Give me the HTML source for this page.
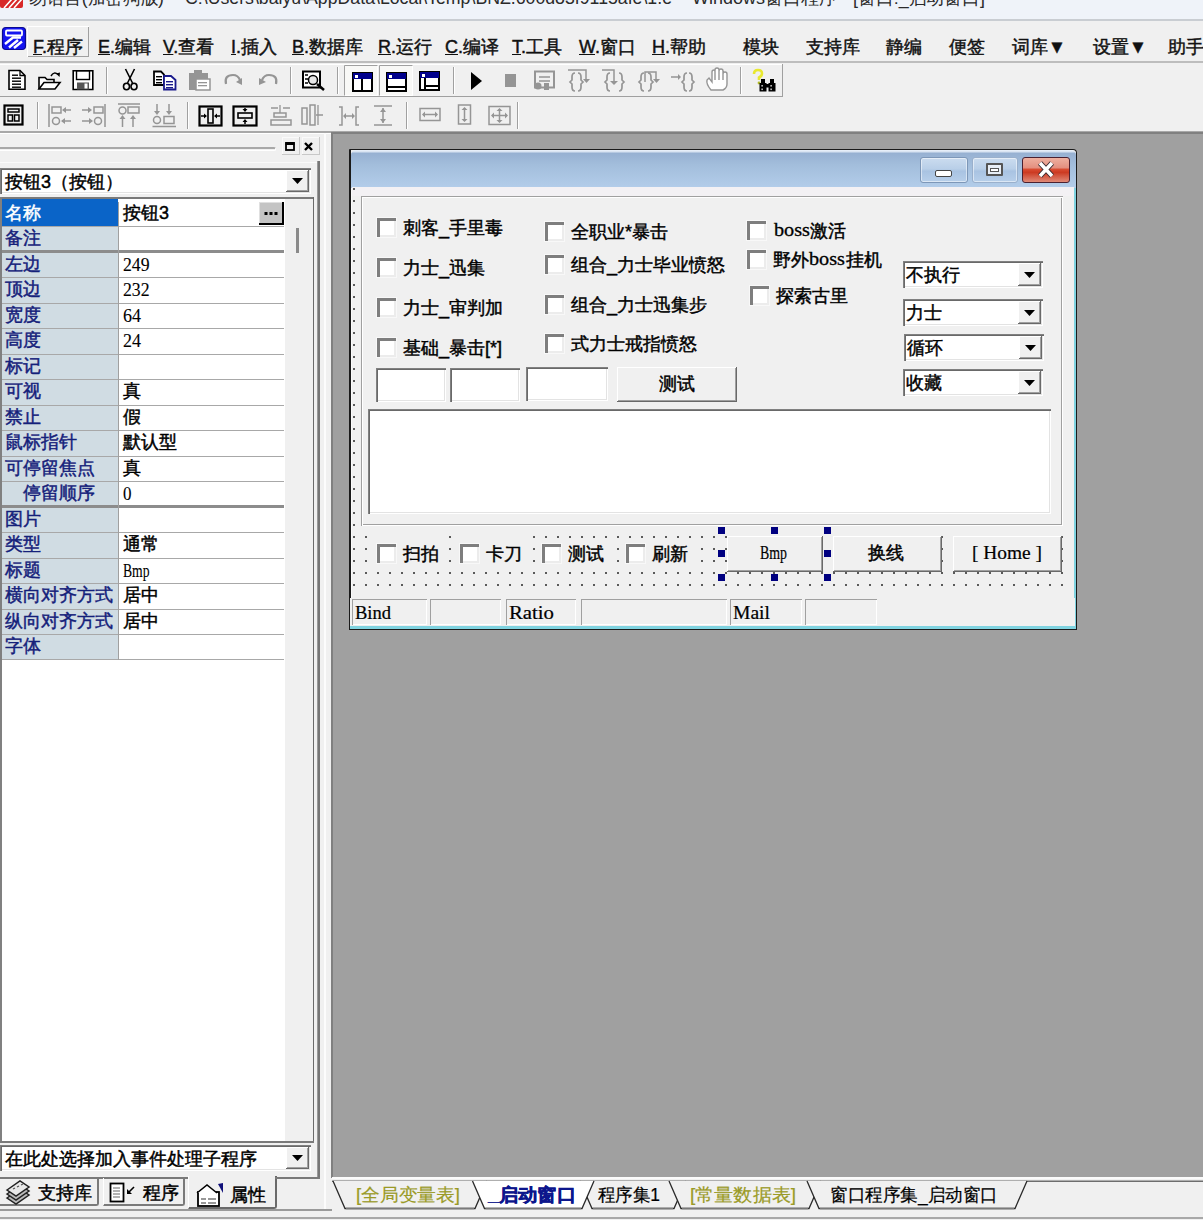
<!DOCTYPE html><html><head><meta charset="utf-8"><style>
*{margin:0;padding:0;box-sizing:border-box}
html,body{width:1203px;height:1220px;overflow:hidden;background:#f0f0f0}
body{font-family:"Liberation Sans",sans-serif;font-size:18px;color:#000;position:relative;-webkit-text-stroke:0.45px currentColor}
.a{position:absolute}
.t{white-space:nowrap;line-height:20px}
.raised{background:#f0f0f0;box-shadow:inset -1px -1px 0 #696969,inset 1px 1px 0 #fff,inset -2px -2px 0 #a0a0a0}
.sunken{background:#fff;box-shadow:inset 1px 1px 0 #808080,inset 2px 2px 0 #696969,inset -1px -1px 0 #fff,inset -2px -2px 0 #e3e3e3}
.sunk1{box-shadow:inset 1px 1px 0 #a0a0a0,inset -1px -1px 0 #fff}
.fit span{display:inline-block;transform-origin:0 50%}
</style></head><body>
<div class="a " style="left:0px;top:0px;width:1203px;height:20px;background:#eff3f9"></div>
<div class="a " style="left:0px;top:19px;width:1203px;height:2px;background:#c9cdd2"></div>
<svg class="a" style="left:0;top:0" width="24" height="10"><rect x="0" y="-4" width="23" height="12" rx="2" fill="#d82828"/><path d="M4 8L12 -1M9 8L17 -1M14 8L22 -1" stroke="#fff" stroke-width="1.6"/></svg>
<div class="a t fit " style="left:29px;top:-12px;width:135px;font-size:18px;color:#2a2a2a;-webkit-text-stroke:0"><span>易语言(加密狗版)</span></div>
<div class="a t fit " style="left:185px;top:-12px;width:487px;font-size:18px;color:#2a2a2a;-webkit-text-stroke:0"><span>C:\Users\baiyu\AppData\Local\Temp\BNZ.600d83f9115afe\1.e</span></div>
<div class="a t fit " style="left:692px;top:-12px;width:145px;font-size:18px;color:#2a2a2a;-webkit-text-stroke:0"><span>Windows窗口程序</span></div>
<div class="a t fit " style="left:853px;top:-12px;width:132px;font-size:18px;color:#2a2a2a;-webkit-text-stroke:0"><span>[窗口:_启动窗口]</span></div>
<div class="a " style="left:0px;top:21px;width:1203px;height:41px;background:#f0f0f0"></div>
<div class="a " style="left:0px;top:61px;width:1203px;height:2px;background:#bdbdbd"></div>
<svg class="a" style="left:1px;top:26px" width="27" height="27"><rect x="1.5" y="1.5" width="23" height="22" rx="3.5" fill="#1414f0" stroke="#0a0a90" stroke-width="1.2"/><rect x="5" y="4.5" width="16" height="5" rx="1" fill="none" stroke="#fff" stroke-width="1.8"/><path d="M4 18L12 11.5H20M8 21.5L17 14M13 22L21 15.5" fill="none" stroke="#fff" stroke-width="2.4"/></svg>
<div class="a " style="left:27px;top:26px;width:62px;height:31px;box-shadow:inset 1px 1px 0 #fff,inset -1px -1px 0 #a0a0a0"></div>
<div class="a t " style="left:33px;top:37px;font-size:18px;color:#111"><u>F</u>.程序</div>
<div class="a t " style="left:98px;top:37px;font-size:18px;color:#111"><u>E</u>.编辑</div>
<div class="a t " style="left:163px;top:37px;font-size:18px;color:#111"><u>V</u>.查看</div>
<div class="a t " style="left:231px;top:37px;font-size:18px;color:#111"><u>I</u>.插入</div>
<div class="a t " style="left:292px;top:37px;font-size:18px;color:#111"><u>B</u>.数据库</div>
<div class="a t " style="left:378px;top:37px;font-size:18px;color:#111"><u>R</u>.运行</div>
<div class="a t " style="left:445px;top:37px;font-size:18px;color:#111"><u>C</u>.编译</div>
<div class="a t " style="left:512px;top:37px;font-size:18px;color:#111"><u>T</u>.工具</div>
<div class="a t " style="left:579px;top:37px;font-size:18px;color:#111"><u>W</u>.窗口</div>
<div class="a t " style="left:652px;top:37px;font-size:18px;color:#111"><u>H</u>.帮助</div>
<div class="a t " style="left:743px;top:37px;font-size:18px;color:#111">模块</div>
<div class="a t " style="left:806px;top:37px;font-size:18px;color:#111">支持库</div>
<div class="a t " style="left:886px;top:37px;font-size:18px;color:#111">静编</div>
<div class="a t " style="left:949px;top:37px;font-size:18px;color:#111">便签</div>
<div class="a t " style="left:1012px;top:37px;font-size:18px;color:#111">词库▼</div>
<div class="a t " style="left:1093px;top:37px;font-size:18px;color:#111">设置▼</div>
<div class="a t " style="left:1168px;top:37px;font-size:18px;color:#111">助手</div>
<div class="a " style="left:0px;top:63px;width:1203px;height:69px;background:#f0f0f0"></div>
<div class="a " style="left:0px;top:96px;width:783px;height:1px;background:#a0a0a0"></div>
<div class="a " style="left:0px;top:131px;width:1203px;height:2px;background:#a8a8a8"></div>
<svg class="a" style="left:0;top:0" width="1203" height="140" shape-rendering="crispEdges">
<rect x="782" y="64" width="1" height="33" fill="#a0a0a0"/>
<rect x="0" y="64" width="782" height="1" fill="#fff"/>
<rect x="106" y="67" width="1" height="27" fill="#a0a0a0"/><rect x="107" y="67" width="1" height="27" fill="#fff"/>
<rect x="290" y="67" width="1" height="27" fill="#a0a0a0"/><rect x="291" y="67" width="1" height="27" fill="#fff"/>
<rect x="337" y="67" width="1" height="27" fill="#a0a0a0"/><rect x="338" y="67" width="1" height="27" fill="#fff"/>
<rect x="453" y="67" width="1" height="27" fill="#a0a0a0"/><rect x="454" y="67" width="1" height="27" fill="#fff"/>
<rect x="740" y="67" width="1" height="27" fill="#a0a0a0"/><rect x="741" y="67" width="1" height="27" fill="#fff"/>
<rect x="37" y="102" width="1" height="27" fill="#a0a0a0"/><rect x="38" y="102" width="1" height="27" fill="#fff"/>
<rect x="187" y="102" width="1" height="27" fill="#a0a0a0"/><rect x="188" y="102" width="1" height="27" fill="#fff"/>
<rect x="406" y="102" width="1" height="27" fill="#a0a0a0"/><rect x="407" y="102" width="1" height="27" fill="#fff"/>
<rect x="517" y="102" width="1" height="27" fill="#a0a0a0"/><rect x="518" y="102" width="1" height="27" fill="#fff"/>
</svg>
<svg class="a" style="left:0;top:0" width="1203" height="140">
<path d="M9 70.5H20L25 75.5V89.2H9Z" fill="#fff" stroke="#000" stroke-width="1.6"/><path d="M20 70.5V75.5H25" fill="none" stroke="#000" stroke-width="1.3"/>
<rect x="12" y="74.5" width="6" height="1.4" fill="#000"/>
<rect x="12" y="77.5" width="9" height="1.4" fill="#000"/>
<rect x="12" y="80.5" width="9" height="1.4" fill="#000"/>
<rect x="12" y="83.5" width="9" height="1.4" fill="#000"/>
<rect x="12" y="86.5" width="9" height="1.4" fill="#000"/>
<path d="M39 89V77.5H45L47 79.5H54V82.5" fill="#fff" stroke="#000" stroke-width="1.6"/><path d="M39 89L44 82.5H60L55 89Z" fill="#fff" stroke="#000" stroke-width="1.6"/><path d="M51 76Q54 71 58 74.5" fill="none" stroke="#000" stroke-width="1.5"/><path d="M56 73.5L60 72.5L59.5 77Z" fill="#000"/>
<path d="M73.2 70.8H92.8V89.5H73.2Z" fill="#fff" stroke="#000" stroke-width="1.6"/><rect x="76.5" y="71" width="13" height="8.5" fill="#fff" stroke="#000" stroke-width="1.4"/><rect x="77" y="82.5" width="12" height="7" fill="#555"/><rect x="84.5" y="83.5" width="3" height="5" fill="#fff"/>
<path d="M125.5 69L132.5 83M134.5 69L127.5 83" stroke="#000" stroke-width="1.6" fill="none"/><ellipse cx="126.5" cy="86.5" rx="3" ry="3.3" fill="none" stroke="#000" stroke-width="1.6"/><ellipse cx="134" cy="86.5" rx="3" ry="3.3" fill="none" stroke="#000" stroke-width="1.6"/>
<path d="M154 71.5H161L164 74.5V85H154Z" fill="#fff" stroke="#000" stroke-width="1.8"/>
<rect x="156" y="76" width="6" height="1.4" fill="#000"/>
<rect x="156" y="79" width="6" height="1.4" fill="#000"/>
<rect x="156" y="82" width="6" height="1.4" fill="#000"/>
<path d="M164 76H171L175.5 80V89.5H164Z" fill="#fff" stroke="#1a1a8c" stroke-width="1.8"/>
<rect x="166" y="81" width="7" height="1.4" fill="#1a1a8c"/>
<rect x="166" y="84" width="7" height="1.4" fill="#1a1a8c"/>
<rect x="166" y="87" width="7" height="1.4" fill="#1a1a8c"/>
<path d="M189 73H208V90H189Z" fill="#959595"/><rect x="194" y="70" width="8" height="4" fill="#959595"/><rect x="196" y="79" width="14" height="11" fill="#fff" stroke="#959595" stroke-width="1.5"/><rect x="198" y="82" width="9" height="1.3" fill="#959595"/><rect x="198" y="85" width="9" height="1.3" fill="#959595"/>
<path d="M226 84Q224 75 233 75Q238 75 240 80" fill="none" stroke="#959595" stroke-width="2.2"/><path d="M236 82L242 85L242 78Z" fill="#959595"/>
<path d="M276 84Q278 75 269 75Q264 75 262 80" fill="none" stroke="#959595" stroke-width="2.2"/><path d="M266 82L259 85L259 78Z" fill="#959595"/>
<rect x="303" y="71.5" width="17" height="16" fill="#fff" stroke="#000" stroke-width="2"/><path d="M305 75h3M305 79h3M305 83h3" stroke="#000" stroke-width="1.5"/><circle cx="313" cy="80" r="4.5" fill="#e8e8e8" stroke="#000" stroke-width="1.5"/><path d="M317 84L324 90" stroke="#000" stroke-width="2.5"/>
<rect x="344" y="65" width="34" height="31" fill="#f8f8f6"/><path d="M344.5 96V65.5H378" fill="none" stroke="#a0a0a0"/><path d="M377.5 65.5V95.5H344.5" fill="none" stroke="#fff"/>
<rect x="379" y="65" width="34" height="31" fill="#f8f8f6"/><path d="M379.5 96V65.5H413" fill="none" stroke="#a0a0a0"/><path d="M412.5 65.5V95.5H379.5" fill="none" stroke="#fff"/>
<rect x="353" y="73" width="19" height="18" fill="#fff" stroke="#000" stroke-width="2"/><rect x="353" y="73" width="19" height="6" fill="#00008c"/><rect x="355" y="75" width="3" height="3" fill="#fff"/>
<rect x="361" y="79" width="2" height="12" fill="#000"/>
<rect x="387" y="73" width="19" height="18" fill="#fff" stroke="#000" stroke-width="2"/><rect x="387" y="73" width="19" height="6" fill="#00008c"/><rect x="389" y="75" width="3" height="3" fill="#fff"/>
<rect x="387" y="86" width="19" height="2" fill="#000"/>
<rect x="420" y="72" width="19" height="18" fill="#fff" stroke="#000" stroke-width="2"/><rect x="420" y="72" width="19" height="6" fill="#00008c"/><rect x="422" y="74" width="3" height="3" fill="#fff"/>
<rect x="424" y="78" width="2" height="12" fill="#000"/><rect x="424" y="85" width="15" height="2" fill="#000"/>
<path d="M471 72L482 81L471 90Z" fill="#000"/>
<rect x="505" y="74" width="11" height="13" fill="#959595"/>
<rect x="535" y="71.5" width="19" height="16" fill="none" stroke="#959595" stroke-width="2"/><path d="M539 77h11M539 81h11" stroke="#959595" stroke-width="1.3"/><circle cx="538" cy="86" r="3.5" fill="#959595"/><rect x="544" y="83" width="5" height="7" fill="#959595"/>
<path d="M575 73Q572 73 572 77V80L570 82L572 84V87Q572 91 575 91" fill="none" stroke="#959595" stroke-width="1.7"/>
<path d="M578 73Q581 73 581 77V80L583 82L581 84V87Q581 91 578 91" fill="none" stroke="#959595" stroke-width="1.7"/>
<path d="M568 70H586V80" fill="none" stroke="#959595" stroke-width="1.5"/><path d="M583 79h7l-3.5 4z" fill="#959595"/>
<path d="M610 73Q607 73 607 77V80L605 82L607 84V87Q607 91 610 91" fill="none" stroke="#959595" stroke-width="1.7"/>
<path d="M619 73Q622 73 622 77V80L624 82L622 84V87Q622 91 619 91" fill="none" stroke="#959595" stroke-width="1.7"/>
<path d="M602 70H614V82" fill="none" stroke="#959595" stroke-width="1.5"/><path d="M610 81h8l-4 4z" fill="#959595"/>
<path d="M644 73Q641 73 641 77V80L639 82L641 84V87Q641 91 644 91" fill="none" stroke="#959595" stroke-width="1.7"/>
<path d="M648 73Q651 73 651 77V80L653 82L651 84V87Q651 91 648 91" fill="none" stroke="#959595" stroke-width="1.7"/>
<path d="M645 82V72H656V80" fill="none" stroke="#959595" stroke-width="1.5"/><path d="M653 79h7l-3.5 4z" fill="#959595"/>
<path d="M671 77H678" stroke="#959595" stroke-width="1.5"/><path d="M678 74v6l3-3z" fill="#959595"/>
<path d="M687 73Q684 73 684 77V80L682 82L684 84V87Q684 91 687 91" fill="none" stroke="#959595" stroke-width="1.7"/>
<path d="M689 73Q692 73 692 77V80L694 82L692 84V87Q692 91 689 91" fill="none" stroke="#959595" stroke-width="1.7"/>
<path d="M711 90Q706 84 707 80L709 78L712 82V72Q712 70 714 70Q715 70 715 72V80V70Q715 68 717 68Q719 68 719 70V80V71Q719 69 721 69Q723 69 723 71V80V74Q723 72 725 72Q727 72 727 74V84Q727 88 723 90Z" fill="#fff" stroke="#959595" stroke-width="1.4"/>
<path d="M754 74Q754 70 758 70Q762 70 762 73.5Q762 76 759 77.5V80" fill="none" stroke="#e8e830" stroke-width="2.6"/><circle cx="759" cy="83" r="1.4" fill="#b0b828"/>
<path d="M761 79H765V83H766.5V91.5H759.5V83H761ZM770 79H774V83H775.5V91.5H768.5V83H770Z" fill="#000"/><rect x="765" y="84" width="4" height="3.5" fill="#000"/><rect x="761.5" y="85" width="1.2" height="1.6" fill="#fff"/><rect x="761.5" y="88.5" width="1.2" height="1.6" fill="#fff"/><rect x="770.5" y="85" width="1.2" height="1.6" fill="#fff"/><rect x="770.5" y="88.5" width="1.2" height="1.6" fill="#fff"/>
<rect x="4.5" y="105.5" width="18" height="19" fill="none" stroke="#000" stroke-width="2.2"/><rect x="8" y="109" width="11" height="3" fill="none" stroke="#000" stroke-width="1.5"/><rect x="8" y="115" width="4.5" height="6" fill="none" stroke="#000" stroke-width="1.5"/><rect x="14.5" y="115" width="4.5" height="6" fill="none" stroke="#000" stroke-width="1.5"/>
<path d="M49 104V127" stroke="#959595" stroke-width="1.5"/><rect x="52" y="107" width="9" height="6" fill="none" stroke="#959595" stroke-width="1.5"/><circle cx="56" cy="121" r="3.5" fill="none" stroke="#959595" stroke-width="1.5"/><path d="M71 110H63M71 121H62" stroke="#959595" stroke-width="1.5"/><path d="M62 110l4-3v6zM61 121l4-3v6z" fill="#959595"/>
<path d="M105 104V127" stroke="#959595" stroke-width="1.5"/><rect x="94" y="107" width="9" height="6" fill="none" stroke="#959595" stroke-width="1.5"/><circle cx="98" cy="121" r="3.5" fill="none" stroke="#959595" stroke-width="1.5"/><path d="M82 110H90M82 121H91" stroke="#959595" stroke-width="1.5"/><path d="M92 110l-4-3v6zM93 121l-4-3v6z" fill="#959595"/>
<path d="M118 104H140" stroke="#959595" stroke-width="1.5"/><circle cx="122.5" cy="110.5" r="3.5" fill="none" stroke="#959595" stroke-width="1.5"/><rect x="128" y="107" width="11" height="6" fill="none" stroke="#959595" stroke-width="1.5"/><path d="M122.5 127V117M133 127V117" stroke="#959595" stroke-width="1.5"/><path d="M119.5 119l3-4 3 4zM130 119l3-4 3 4z" fill="#959595"/>
<path d="M152.5 126.5H176" stroke="#959595" stroke-width="1.5"/><circle cx="157" cy="120" r="3.5" fill="none" stroke="#959595" stroke-width="1.5"/><rect x="164" y="116.5" width="10" height="7" fill="none" stroke="#959595" stroke-width="1.5"/><path d="M157 104V113M169 104V113" stroke="#959595" stroke-width="1.5"/><path d="M154 111l3 4 3-4zM166 111l3 4 3-4z" fill="#959595"/>
<rect x="199.5" y="106.5" width="22" height="19" fill="none" stroke="#000" stroke-width="2.2"/><rect x="208" y="109" width="5" height="14" fill="none" stroke="#000" stroke-width="1.6"/><path d="M201 116H206M215 116H220" stroke="#000" stroke-width="1.5"/><path d="M207 116l-3-2.5v5zM214 116l3-2.5v5z" fill="#000"/>
<rect x="233.5" y="106.5" width="23" height="19" fill="none" stroke="#000" stroke-width="2.2"/><rect x="238" y="113" width="14" height="5" fill="none" stroke="#000" stroke-width="1.6"/><path d="M245 108V111M245 120V124" stroke="#000" stroke-width="1.5"/><path d="M245 112l-2.5-3h5zM245 119l-2.5 3h5z" fill="#000"/>
<rect x="271" y="120" width="20" height="5" fill="none" stroke="#959595" stroke-width="1.5"/><rect x="274" y="113" width="12" height="4" fill="none" stroke="#959595" stroke-width="1.5"/><path d="M280 105V113M271 108H278M283 108H290" stroke="#959595" stroke-width="1.3"/>
<rect x="302" y="108" width="5" height="16" fill="none" stroke="#959595" stroke-width="1.5"/><rect x="310" y="105" width="5" height="20" fill="none" stroke="#959595" stroke-width="1.5"/><path d="M318 105V125M316 115H323" stroke="#959595" stroke-width="1.3"/>
<path d="M339 107H342V125H339M359 107H356V125H359" fill="none" stroke="#959595" stroke-width="1.5"/><path d="M344 116H354" stroke="#959595" stroke-width="1.5"/><path d="M343 116l3-3v6zM355 116l-3-3v6z" fill="#959595"/>
<path d="M374 106H392M374 125H392M383 108V123" stroke="#959595" stroke-width="1.5"/><path d="M383 108l-3 4h6zM383 123l-3-4h6z" fill="#959595"/>
<rect x="420" y="108.5" width="20" height="12" fill="none" stroke="#959595" stroke-width="1.5"/><path d="M423 114.5H437" stroke="#959595" stroke-width="1.5"/><path d="M422 114.5l3-3v6zM438 114.5l-3-3v6z" fill="#959595"/>
<rect x="458.5" y="105" width="12" height="19" fill="none" stroke="#959595" stroke-width="1.5"/><path d="M464.5 108V121" stroke="#959595" stroke-width="1.5"/><path d="M464.5 107l-3 3h6zM464.5 122l-3-3h6z" fill="#959595"/>
<rect x="489" y="106.5" width="21" height="18" fill="none" stroke="#959595" stroke-width="1.5"/><path d="M492 115.5H507M499.5 109V122" stroke="#959595" stroke-width="1.5"/><path d="M491 115.5l3-3v6zM508 115.5l-3-3v6zM499.5 108l-3 3h6zM499.5 123l-3-3h6z" fill="#959595"/>
</svg>
<div class="a " style="left:0px;top:133px;width:332px;height:1087px;background:#f0f0f0"></div>
<div class="a " style="left:-4px;top:147px;width:280px;height:4px;border:2px solid #a8a8a8;border-bottom:1px solid #fff;border-right:1px solid #fff;border-radius:0 2px 2px 0"></div>
<div class="a " style="left:0px;top:133px;width:331px;height:1px;background:#fff"></div>
<div class="a " style="left:282px;top:137px;width:18px;height:18px;box-shadow:inset -1px -1px 0 #c8c8c8,inset 1px 1px 0 #fafafa"></div>
<div class="a " style="left:302px;top:137px;width:18px;height:18px;box-shadow:inset -1px -1px 0 #c8c8c8,inset 1px 1px 0 #fafafa"></div>
<svg class="a" style="left:280px;top:135px" width="40" height="22"><rect x="6" y="8" width="8" height="7" fill="none" stroke="#000" stroke-width="1.8"/><rect x="5.5" y="7" width="9" height="3" fill="#000"/><path d="M25 8L32 15M32 8L25 15" stroke="#000" stroke-width="2.4"/></svg>
<div class="a " style="left:0px;top:162px;width:318px;height:1px;background:#fafafa"></div>
<div class="a " style="left:317px;top:161px;width:1px;height:1017px;background:#9a9a9a"></div>
<div class="a " style="left:318px;top:161px;width:2px;height:1017px;background:#767676"></div>
<div class="a " style="left:0px;top:1177px;width:320px;height:1px;background:#767676"></div>
<div class="a sunken" style="left:0px;top:168px;width:311px;height:26px;"></div>
<div class="a t " style="left:5px;top:172px;font-size:18px">按钮3（按钮）</div>
<div class="a raised" style="left:286px;top:170px;width:23px;height:22px;"><svg width="23" height="22"><path d="M6 8h11l-5.5 6z" fill="#000"/></svg></div>
<div class="a " style="left:0px;top:197px;width:314px;height:946px;background:#fff"></div>
<div class="a " style="left:0px;top:197px;width:314px;height:2px;background:#7a7a7a"></div>
<div class="a " style="left:0px;top:197px;width:2px;height:946px;background:#808080"></div>
<div class="a " style="left:284px;top:199px;width:29px;height:942px;background:#f0f0f0;box-shadow:inset 1px 0 0 #fff"></div>
<div class="a " style="left:313px;top:197px;width:1px;height:946px;background:#6a6a6a"></div>
<div class="a " style="left:314px;top:197px;width:3px;height:946px;background:#f0f0f0"></div>
<div class="a " style="left:0px;top:1141px;width:314px;height:2px;background:#7a7a7a"></div>
<div class="a " style="left:296px;top:228px;width:3px;height:25px;background:#8a8a8a"></div>
<div class="a " style="left:2px;top:199px;width:116px;height:27px;background:#0a64c8"></div>
<div class="a t " style="left:5px;top:203px;color:#fff">名称</div>
<div class="a " style="left:2px;top:226px;width:282px;height:1px;background:#a8a8a8"></div>
<div class="a " style="left:118px;top:202px;width:1px;height:25px;background:#a0a0a0"></div>
<div class="a t " style="left:123px;top:203px;">按钮3</div>
<div class="a " style="left:2px;top:227px;width:116px;height:25px;background:#d0dce3"></div>
<div class="a t " style="left:5px;top:228px;color:#14207a">备注</div>
<div class="a " style="left:2px;top:250px;width:282px;height:2.5px;background:#8c8c8c"></div>
<div class="a " style="left:118px;top:227px;width:1px;height:26px;background:#a0a0a0"></div>
<div class="a " style="left:2px;top:253px;width:116px;height:24px;background:#d0dce3"></div>
<div class="a t " style="left:5px;top:254px;color:#14207a">左边</div>
<div class="a " style="left:2px;top:277px;width:282px;height:1px;background:#a8a8a8"></div>
<div class="a " style="left:118px;top:253px;width:1px;height:25px;background:#a0a0a0"></div>
<div class="a t fit " style="left:123px;top:255px;width:26.6px;font-family:'Liberation Serif',serif;font-size:18px;-webkit-text-stroke:0.1px #000"><span>249</span></div>
<div class="a " style="left:2px;top:278px;width:116px;height:25px;background:#d0dce3"></div>
<div class="a t " style="left:5px;top:279px;color:#14207a">顶边</div>
<div class="a " style="left:2px;top:303px;width:282px;height:1px;background:#a8a8a8"></div>
<div class="a " style="left:118px;top:278px;width:1px;height:26px;background:#a0a0a0"></div>
<div class="a t fit " style="left:123px;top:280px;width:26.6px;font-family:'Liberation Serif',serif;font-size:18px;-webkit-text-stroke:0.1px #000"><span>232</span></div>
<div class="a " style="left:2px;top:304px;width:116px;height:24px;background:#d0dce3"></div>
<div class="a t " style="left:5px;top:305px;color:#14207a">宽度</div>
<div class="a " style="left:2px;top:328px;width:282px;height:1px;background:#a8a8a8"></div>
<div class="a " style="left:118px;top:304px;width:1px;height:25px;background:#a0a0a0"></div>
<div class="a t fit " style="left:123px;top:306px;width:18px;font-family:'Liberation Serif',serif;font-size:18px;-webkit-text-stroke:0.1px #000"><span>64</span></div>
<div class="a " style="left:2px;top:329px;width:116px;height:25px;background:#d0dce3"></div>
<div class="a t " style="left:5px;top:330px;color:#14207a">高度</div>
<div class="a " style="left:2px;top:354px;width:282px;height:1px;background:#a8a8a8"></div>
<div class="a " style="left:118px;top:329px;width:1px;height:26px;background:#a0a0a0"></div>
<div class="a t fit " style="left:123px;top:331px;width:18px;font-family:'Liberation Serif',serif;font-size:18px;-webkit-text-stroke:0.1px #000"><span>24</span></div>
<div class="a " style="left:2px;top:355px;width:116px;height:24px;background:#d0dce3"></div>
<div class="a t " style="left:5px;top:356px;color:#14207a">标记</div>
<div class="a " style="left:2px;top:379px;width:282px;height:1px;background:#a8a8a8"></div>
<div class="a " style="left:118px;top:355px;width:1px;height:25px;background:#a0a0a0"></div>
<div class="a " style="left:2px;top:380px;width:116px;height:25px;background:#d0dce3"></div>
<div class="a t " style="left:5px;top:381px;color:#14207a">可视</div>
<div class="a " style="left:2px;top:405px;width:282px;height:1px;background:#a8a8a8"></div>
<div class="a " style="left:118px;top:380px;width:1px;height:26px;background:#a0a0a0"></div>
<div class="a t " style="left:123px;top:381px;">真</div>
<div class="a " style="left:2px;top:406px;width:116px;height:24px;background:#d0dce3"></div>
<div class="a t " style="left:5px;top:407px;color:#14207a">禁止</div>
<div class="a " style="left:2px;top:430px;width:282px;height:1px;background:#a8a8a8"></div>
<div class="a " style="left:118px;top:406px;width:1px;height:25px;background:#a0a0a0"></div>
<div class="a t " style="left:123px;top:407px;">假</div>
<div class="a " style="left:2px;top:431px;width:116px;height:25px;background:#d0dce3"></div>
<div class="a t " style="left:5px;top:432px;color:#14207a">鼠标指针</div>
<div class="a " style="left:2px;top:456px;width:282px;height:1px;background:#a8a8a8"></div>
<div class="a " style="left:118px;top:431px;width:1px;height:26px;background:#a0a0a0"></div>
<div class="a t " style="left:123px;top:432px;">默认型</div>
<div class="a " style="left:2px;top:457px;width:116px;height:24px;background:#d0dce3"></div>
<div class="a t " style="left:5px;top:458px;color:#14207a">可停留焦点</div>
<div class="a " style="left:2px;top:481px;width:282px;height:1px;background:#a8a8a8"></div>
<div class="a " style="left:118px;top:457px;width:1px;height:25px;background:#a0a0a0"></div>
<div class="a t " style="left:123px;top:458px;">真</div>
<div class="a " style="left:2px;top:482px;width:116px;height:25px;background:#d0dce3"></div>
<div class="a t " style="left:5px;top:483px;color:#14207a">　停留顺序</div>
<div class="a " style="left:2px;top:505px;width:282px;height:2.5px;background:#8c8c8c"></div>
<div class="a " style="left:118px;top:482px;width:1px;height:26px;background:#a0a0a0"></div>
<div class="a t fit " style="left:123px;top:484px;width:8.5px;font-family:'Liberation Serif',serif;font-size:18px;-webkit-text-stroke:0.1px #000"><span>0</span></div>
<div class="a " style="left:2px;top:508px;width:116px;height:24px;background:#d0dce3"></div>
<div class="a t " style="left:5px;top:509px;color:#14207a">图片</div>
<div class="a " style="left:2px;top:532px;width:282px;height:1px;background:#a8a8a8"></div>
<div class="a " style="left:118px;top:508px;width:1px;height:25px;background:#a0a0a0"></div>
<div class="a " style="left:2px;top:533px;width:116px;height:25px;background:#d0dce3"></div>
<div class="a t " style="left:5px;top:534px;color:#14207a">类型</div>
<div class="a " style="left:2px;top:558px;width:282px;height:1px;background:#a8a8a8"></div>
<div class="a " style="left:118px;top:533px;width:1px;height:26px;background:#a0a0a0"></div>
<div class="a t " style="left:123px;top:534px;">通常</div>
<div class="a " style="left:2px;top:559px;width:116px;height:24px;background:#d0dce3"></div>
<div class="a t " style="left:5px;top:560px;color:#14207a">标题</div>
<div class="a " style="left:2px;top:583px;width:282px;height:1px;background:#a8a8a8"></div>
<div class="a " style="left:118px;top:559px;width:1px;height:25px;background:#a0a0a0"></div>
<div class="a t fit " style="left:123px;top:561px;width:26.6px;font-family:'Liberation Serif',serif;font-size:18px;-webkit-text-stroke:0.1px #000"><span>Bmp</span></div>
<div class="a " style="left:2px;top:584px;width:116px;height:25px;background:#d0dce3"></div>
<div class="a t " style="left:5px;top:585px;color:#14207a">横向对齐方式</div>
<div class="a " style="left:2px;top:609px;width:282px;height:1px;background:#a8a8a8"></div>
<div class="a " style="left:118px;top:584px;width:1px;height:26px;background:#a0a0a0"></div>
<div class="a t " style="left:123px;top:585px;">居中</div>
<div class="a " style="left:2px;top:610px;width:116px;height:24px;background:#d0dce3"></div>
<div class="a t " style="left:5px;top:611px;color:#14207a">纵向对齐方式</div>
<div class="a " style="left:2px;top:634px;width:282px;height:1px;background:#a8a8a8"></div>
<div class="a " style="left:118px;top:610px;width:1px;height:25px;background:#a0a0a0"></div>
<div class="a t " style="left:123px;top:611px;">居中</div>
<div class="a " style="left:2px;top:635px;width:116px;height:24px;background:#d0dce3"></div>
<div class="a t " style="left:5px;top:636px;color:#14207a">字体</div>
<div class="a " style="left:2px;top:659px;width:282px;height:1px;background:#a8a8a8"></div>
<div class="a " style="left:118px;top:635px;width:1px;height:25px;background:#a0a0a0"></div>
<div class="a " style="left:259px;top:202px;width:25px;height:23px;background:#c4c4c4;box-shadow:inset -2px -2px 0 #000,inset 1px 1px 0 #e0e0e0"><svg width="25" height="23"><rect x="5.5" y="10" width="3" height="3"/><rect x="10.5" y="10" width="3" height="3"/><rect x="15.5" y="10" width="3" height="3"/></svg></div>
<div class="a sunken" style="left:0px;top:1145px;width:311px;height:26px;"></div>
<div class="a t " style="left:5px;top:1149px;">在此处选择加入事件处理子程序</div>
<div class="a raised" style="left:286px;top:1147px;width:23px;height:22px;"><svg width="23" height="22"><path d="M6 8h11l-5.5 6z" fill="#000"/></svg></div>
<div class="a " style="left:0px;top:1177px;width:277px;height:1.5px;background:#7a7a7a"></div>
<div class="a " style="left:0px;top:1178px;width:99px;height:28px;border-right:2px solid #7a7a7a;border-bottom:2px solid #7a7a7a;border-radius:0 0 3px 0"></div>
<div class="a t " style="left:38px;top:1183px;">支持库</div>
<div class="a " style="left:103px;top:1178px;width:82px;height:28px;border-left:1px solid #fff;border-right:2px solid #7a7a7a;border-bottom:2px solid #7a7a7a;border-radius:0 0 3px 0"></div>
<div class="a t " style="left:143px;top:1183px;">程序</div>
<div class="a " style="left:188px;top:1176px;width:89px;height:33px;background:#f0f0f0;border-left:1px solid #fff;border-right:2px solid #6a6a6a;border-bottom:2px solid #6a6a6a;border-radius:0 0 3px 0"></div>
<div class="a t " style="left:230px;top:1185px;">属性</div>
<div class="a " style="left:275px;top:1177px;width:45px;height:1.5px;background:#7a7a7a"></div>
<svg class="a" style="left:0;top:1170px" width="330" height="50">
<path d="M7 28L20 19L29 25L16 34Z" fill="#bbb" stroke="#222" stroke-width="1.5"/>
<path d="M7 24L20 15L29 21L16 30Z" fill="#bbb" stroke="#222" stroke-width="1.5"/>
<path d="M7 20L20 11L29 17L16 26Z" fill="#e8e8e8" stroke="#222" stroke-width="1.5"/>
<path d="M13 19l2-1M17 17l2-1M21 15l2-1" stroke="#555" stroke-width="1.2"/>
<rect x="110.5" y="13.5" width="13" height="18" fill="#fff" stroke="#000" stroke-width="1.8"/><path d="M113 18h7M113 21h7M113 24h7M113 27h7" stroke="#666" stroke-width="1.2"/><path d="M134 17L128 23" stroke="#000" stroke-width="1.6"/><path d="M127 24v-5l5 5z" fill="#000"/>
<rect x="198" y="22" width="21" height="14" fill="#fff" stroke="#000" stroke-width="1.8"/><path d="M197 23L207 15L217 23" fill="#fff" stroke="#000" stroke-width="1.6"/><path d="M201 29h5M208 29h8M201 33h5M208 33h8" stroke="#333" stroke-width="1.2"/><path d="M218 14L223 13V23Z" fill="#10107a"/>
</svg>
<div class="a " style="left:0px;top:1209px;width:332px;height:1.5px;background:#9a9a9a"></div>
<div class="a " style="left:0px;top:1211px;width:1203px;height:9px;background:#f0f0f0"></div>
<div class="a " style="left:0px;top:1217px;width:1203px;height:1.5px;background:#a8a8a8"></div>
<div class="a " style="left:324px;top:133px;width:2px;height:1076px;background:#fcfcfc"></div>
<div class="a " style="left:331px;top:132px;width:872px;height:1046px;background:#a0a0a0;box-shadow:inset 2px 2px 0 #808080"></div>
<div class="a " style="left:349px;top:149px;width:728px;height:481px;background:#f0f0f0;border:1px solid #1a1a1a;border-left-width:2px;border-radius:1px 4px 0 0"></div>
<div class="a " style="left:351px;top:150px;width:725px;height:38px;background:linear-gradient(#e6eef8 0,#e6eef8 3%,#97b1d2 9%,#a3bedc 40%,#b3cdea 100%);border-radius:5px 5px 0 0"></div>
<div class="a " style="left:351px;top:188px;width:1px;height:439px;background:#fafafa"></div>
<div class="a " style="left:352px;top:187px;width:722px;height:9px;background:#f3f1f4"></div>
<div class="a " style="left:1074px;top:188px;width:2px;height:441px;background:#7fd3e0"></div>
<div class="a " style="left:350px;top:626px;width:726px;height:3px;background:#7fd3e0"></div>
<div class="a " style="left:920px;top:157px;width:48px;height:26px;background:linear-gradient(#cbdcef,#b9cfe8 45%,#a9c3e2 55%,#b7cfea);box-shadow:inset 0 0 0 1px rgba(255,255,255,.5);border:1px solid #7d97b8;border-radius:3px"><div class="a" style="left:14px;top:12px;width:17px;height:7px;border:1.5px solid #444;border-radius:2px;background:#fff"></div></div>
<div class="a " style="left:972px;top:157px;width:46px;height:26px;background:linear-gradient(#cbdcef,#b9cfe8 45%,#a9c3e2 55%,#b7cfea);box-shadow:inset 0 0 0 1px rgba(255,255,255,.5);border:1px solid #7d97b8;border-radius:3px;border-color:#9ab0cc"><div class="a" style="left:13px;top:5px;width:17px;height:13px;border:2px solid #555;border-radius:1px;background:#e8eef6"><div class="a" style="left:2px;top:3px;width:9px;height:4px;border:1.5px solid #555;background:#fff"></div></div></div>
<div class="a " style="left:1022px;top:157px;width:48px;height:26px;background:linear-gradient(#eeb0a0,#e49080 40%,#d84a30 48%,#cc3a22 60%,#e08a78);border:1px solid #4a2030;border-radius:3px"><svg width="46" height="24" class="a" style="left:0;top:0"><path d="M17 5L29 18M29 5L17 18" stroke="#3a2a30" stroke-width="5.5"/><path d="M17 5L29 18M29 5L17 18" stroke="#fff" stroke-width="3.5"/></svg></div>
<svg class="a" style="left:0;top:0" width="1203" height="1220" shape-rendering="crispEdges">
<path fill="#5a5a5a" d="M353 188h2v2h-2zM365 188h2v2h-2zM377 188h2v2h-2zM389 188h2v2h-2zM401 188h2v2h-2zM413 188h2v2h-2zM425 188h2v2h-2zM437 188h2v2h-2zM449 188h2v2h-2zM461 188h2v2h-2zM473 188h2v2h-2zM485 188h2v2h-2zM497 188h2v2h-2zM509 188h2v2h-2zM521 188h2v2h-2zM533 188h2v2h-2zM545 188h2v2h-2zM557 188h2v2h-2zM569 188h2v2h-2zM581 188h2v2h-2zM593 188h2v2h-2zM605 188h2v2h-2zM617 188h2v2h-2zM629 188h2v2h-2zM641 188h2v2h-2zM653 188h2v2h-2zM665 188h2v2h-2zM677 188h2v2h-2zM689 188h2v2h-2zM701 188h2v2h-2zM713 188h2v2h-2zM725 188h2v2h-2zM737 188h2v2h-2zM749 188h2v2h-2zM761 188h2v2h-2zM773 188h2v2h-2zM785 188h2v2h-2zM797 188h2v2h-2zM809 188h2v2h-2zM821 188h2v2h-2zM833 188h2v2h-2zM845 188h2v2h-2zM857 188h2v2h-2zM869 188h2v2h-2zM881 188h2v2h-2zM893 188h2v2h-2zM905 188h2v2h-2zM917 188h2v2h-2zM929 188h2v2h-2zM941 188h2v2h-2zM953 188h2v2h-2zM965 188h2v2h-2zM977 188h2v2h-2zM989 188h2v2h-2zM1001 188h2v2h-2zM1013 188h2v2h-2zM1025 188h2v2h-2zM1037 188h2v2h-2zM1049 188h2v2h-2zM1061 188h2v2h-2zM353 200h2v2h-2zM365 200h2v2h-2zM377 200h2v2h-2zM389 200h2v2h-2zM401 200h2v2h-2zM413 200h2v2h-2zM425 200h2v2h-2zM437 200h2v2h-2zM449 200h2v2h-2zM461 200h2v2h-2zM473 200h2v2h-2zM485 200h2v2h-2zM497 200h2v2h-2zM509 200h2v2h-2zM521 200h2v2h-2zM533 200h2v2h-2zM545 200h2v2h-2zM557 200h2v2h-2zM569 200h2v2h-2zM581 200h2v2h-2zM593 200h2v2h-2zM605 200h2v2h-2zM617 200h2v2h-2zM629 200h2v2h-2zM641 200h2v2h-2zM653 200h2v2h-2zM665 200h2v2h-2zM677 200h2v2h-2zM689 200h2v2h-2zM701 200h2v2h-2zM713 200h2v2h-2zM725 200h2v2h-2zM737 200h2v2h-2zM749 200h2v2h-2zM761 200h2v2h-2zM773 200h2v2h-2zM785 200h2v2h-2zM797 200h2v2h-2zM809 200h2v2h-2zM821 200h2v2h-2zM833 200h2v2h-2zM845 200h2v2h-2zM857 200h2v2h-2zM869 200h2v2h-2zM881 200h2v2h-2zM893 200h2v2h-2zM905 200h2v2h-2zM917 200h2v2h-2zM929 200h2v2h-2zM941 200h2v2h-2zM953 200h2v2h-2zM965 200h2v2h-2zM977 200h2v2h-2zM989 200h2v2h-2zM1001 200h2v2h-2zM1013 200h2v2h-2zM1025 200h2v2h-2zM1037 200h2v2h-2zM1049 200h2v2h-2zM1061 200h2v2h-2zM353 212h2v2h-2zM365 212h2v2h-2zM377 212h2v2h-2zM389 212h2v2h-2zM401 212h2v2h-2zM413 212h2v2h-2zM425 212h2v2h-2zM437 212h2v2h-2zM449 212h2v2h-2zM461 212h2v2h-2zM473 212h2v2h-2zM485 212h2v2h-2zM497 212h2v2h-2zM509 212h2v2h-2zM521 212h2v2h-2zM533 212h2v2h-2zM545 212h2v2h-2zM557 212h2v2h-2zM569 212h2v2h-2zM581 212h2v2h-2zM593 212h2v2h-2zM605 212h2v2h-2zM617 212h2v2h-2zM629 212h2v2h-2zM641 212h2v2h-2zM653 212h2v2h-2zM665 212h2v2h-2zM677 212h2v2h-2zM689 212h2v2h-2zM701 212h2v2h-2zM713 212h2v2h-2zM725 212h2v2h-2zM737 212h2v2h-2zM749 212h2v2h-2zM761 212h2v2h-2zM773 212h2v2h-2zM785 212h2v2h-2zM797 212h2v2h-2zM809 212h2v2h-2zM821 212h2v2h-2zM833 212h2v2h-2zM845 212h2v2h-2zM857 212h2v2h-2zM869 212h2v2h-2zM881 212h2v2h-2zM893 212h2v2h-2zM905 212h2v2h-2zM917 212h2v2h-2zM929 212h2v2h-2zM941 212h2v2h-2zM953 212h2v2h-2zM965 212h2v2h-2zM977 212h2v2h-2zM989 212h2v2h-2zM1001 212h2v2h-2zM1013 212h2v2h-2zM1025 212h2v2h-2zM1037 212h2v2h-2zM1049 212h2v2h-2zM1061 212h2v2h-2zM353 224h2v2h-2zM365 224h2v2h-2zM377 224h2v2h-2zM389 224h2v2h-2zM401 224h2v2h-2zM413 224h2v2h-2zM425 224h2v2h-2zM437 224h2v2h-2zM449 224h2v2h-2zM461 224h2v2h-2zM473 224h2v2h-2zM485 224h2v2h-2zM497 224h2v2h-2zM509 224h2v2h-2zM521 224h2v2h-2zM533 224h2v2h-2zM545 224h2v2h-2zM557 224h2v2h-2zM569 224h2v2h-2zM581 224h2v2h-2zM593 224h2v2h-2zM605 224h2v2h-2zM617 224h2v2h-2zM629 224h2v2h-2zM641 224h2v2h-2zM653 224h2v2h-2zM665 224h2v2h-2zM677 224h2v2h-2zM689 224h2v2h-2zM701 224h2v2h-2zM713 224h2v2h-2zM725 224h2v2h-2zM737 224h2v2h-2zM749 224h2v2h-2zM761 224h2v2h-2zM773 224h2v2h-2zM785 224h2v2h-2zM797 224h2v2h-2zM809 224h2v2h-2zM821 224h2v2h-2zM833 224h2v2h-2zM845 224h2v2h-2zM857 224h2v2h-2zM869 224h2v2h-2zM881 224h2v2h-2zM893 224h2v2h-2zM905 224h2v2h-2zM917 224h2v2h-2zM929 224h2v2h-2zM941 224h2v2h-2zM953 224h2v2h-2zM965 224h2v2h-2zM977 224h2v2h-2zM989 224h2v2h-2zM1001 224h2v2h-2zM1013 224h2v2h-2zM1025 224h2v2h-2zM1037 224h2v2h-2zM1049 224h2v2h-2zM1061 224h2v2h-2zM353 236h2v2h-2zM365 236h2v2h-2zM377 236h2v2h-2zM389 236h2v2h-2zM401 236h2v2h-2zM413 236h2v2h-2zM425 236h2v2h-2zM437 236h2v2h-2zM449 236h2v2h-2zM461 236h2v2h-2zM473 236h2v2h-2zM485 236h2v2h-2zM497 236h2v2h-2zM509 236h2v2h-2zM521 236h2v2h-2zM533 236h2v2h-2zM545 236h2v2h-2zM557 236h2v2h-2zM569 236h2v2h-2zM581 236h2v2h-2zM593 236h2v2h-2zM605 236h2v2h-2zM617 236h2v2h-2zM629 236h2v2h-2zM641 236h2v2h-2zM653 236h2v2h-2zM665 236h2v2h-2zM677 236h2v2h-2zM689 236h2v2h-2zM701 236h2v2h-2zM713 236h2v2h-2zM725 236h2v2h-2zM737 236h2v2h-2zM749 236h2v2h-2zM761 236h2v2h-2zM773 236h2v2h-2zM785 236h2v2h-2zM797 236h2v2h-2zM809 236h2v2h-2zM821 236h2v2h-2zM833 236h2v2h-2zM845 236h2v2h-2zM857 236h2v2h-2zM869 236h2v2h-2zM881 236h2v2h-2zM893 236h2v2h-2zM905 236h2v2h-2zM917 236h2v2h-2zM929 236h2v2h-2zM941 236h2v2h-2zM953 236h2v2h-2zM965 236h2v2h-2zM977 236h2v2h-2zM989 236h2v2h-2zM1001 236h2v2h-2zM1013 236h2v2h-2zM1025 236h2v2h-2zM1037 236h2v2h-2zM1049 236h2v2h-2zM1061 236h2v2h-2zM353 248h2v2h-2zM365 248h2v2h-2zM377 248h2v2h-2zM389 248h2v2h-2zM401 248h2v2h-2zM413 248h2v2h-2zM425 248h2v2h-2zM437 248h2v2h-2zM449 248h2v2h-2zM461 248h2v2h-2zM473 248h2v2h-2zM485 248h2v2h-2zM497 248h2v2h-2zM509 248h2v2h-2zM521 248h2v2h-2zM533 248h2v2h-2zM545 248h2v2h-2zM557 248h2v2h-2zM569 248h2v2h-2zM581 248h2v2h-2zM593 248h2v2h-2zM605 248h2v2h-2zM617 248h2v2h-2zM629 248h2v2h-2zM641 248h2v2h-2zM653 248h2v2h-2zM665 248h2v2h-2zM677 248h2v2h-2zM689 248h2v2h-2zM701 248h2v2h-2zM713 248h2v2h-2zM725 248h2v2h-2zM737 248h2v2h-2zM749 248h2v2h-2zM761 248h2v2h-2zM773 248h2v2h-2zM785 248h2v2h-2zM797 248h2v2h-2zM809 248h2v2h-2zM821 248h2v2h-2zM833 248h2v2h-2zM845 248h2v2h-2zM857 248h2v2h-2zM869 248h2v2h-2zM881 248h2v2h-2zM893 248h2v2h-2zM905 248h2v2h-2zM917 248h2v2h-2zM929 248h2v2h-2zM941 248h2v2h-2zM953 248h2v2h-2zM965 248h2v2h-2zM977 248h2v2h-2zM989 248h2v2h-2zM1001 248h2v2h-2zM1013 248h2v2h-2zM1025 248h2v2h-2zM1037 248h2v2h-2zM1049 248h2v2h-2zM1061 248h2v2h-2zM353 260h2v2h-2zM365 260h2v2h-2zM377 260h2v2h-2zM389 260h2v2h-2zM401 260h2v2h-2zM413 260h2v2h-2zM425 260h2v2h-2zM437 260h2v2h-2zM449 260h2v2h-2zM461 260h2v2h-2zM473 260h2v2h-2zM485 260h2v2h-2zM497 260h2v2h-2zM509 260h2v2h-2zM521 260h2v2h-2zM533 260h2v2h-2zM545 260h2v2h-2zM557 260h2v2h-2zM569 260h2v2h-2zM581 260h2v2h-2zM593 260h2v2h-2zM605 260h2v2h-2zM617 260h2v2h-2zM629 260h2v2h-2zM641 260h2v2h-2zM653 260h2v2h-2zM665 260h2v2h-2zM677 260h2v2h-2zM689 260h2v2h-2zM701 260h2v2h-2zM713 260h2v2h-2zM725 260h2v2h-2zM737 260h2v2h-2zM749 260h2v2h-2zM761 260h2v2h-2zM773 260h2v2h-2zM785 260h2v2h-2zM797 260h2v2h-2zM809 260h2v2h-2zM821 260h2v2h-2zM833 260h2v2h-2zM845 260h2v2h-2zM857 260h2v2h-2zM869 260h2v2h-2zM881 260h2v2h-2zM893 260h2v2h-2zM905 260h2v2h-2zM917 260h2v2h-2zM929 260h2v2h-2zM941 260h2v2h-2zM953 260h2v2h-2zM965 260h2v2h-2zM977 260h2v2h-2zM989 260h2v2h-2zM1001 260h2v2h-2zM1013 260h2v2h-2zM1025 260h2v2h-2zM1037 260h2v2h-2zM1049 260h2v2h-2zM1061 260h2v2h-2zM353 272h2v2h-2zM365 272h2v2h-2zM377 272h2v2h-2zM389 272h2v2h-2zM401 272h2v2h-2zM413 272h2v2h-2zM425 272h2v2h-2zM437 272h2v2h-2zM449 272h2v2h-2zM461 272h2v2h-2zM473 272h2v2h-2zM485 272h2v2h-2zM497 272h2v2h-2zM509 272h2v2h-2zM521 272h2v2h-2zM533 272h2v2h-2zM545 272h2v2h-2zM557 272h2v2h-2zM569 272h2v2h-2zM581 272h2v2h-2zM593 272h2v2h-2zM605 272h2v2h-2zM617 272h2v2h-2zM629 272h2v2h-2zM641 272h2v2h-2zM653 272h2v2h-2zM665 272h2v2h-2zM677 272h2v2h-2zM689 272h2v2h-2zM701 272h2v2h-2zM713 272h2v2h-2zM725 272h2v2h-2zM737 272h2v2h-2zM749 272h2v2h-2zM761 272h2v2h-2zM773 272h2v2h-2zM785 272h2v2h-2zM797 272h2v2h-2zM809 272h2v2h-2zM821 272h2v2h-2zM833 272h2v2h-2zM845 272h2v2h-2zM857 272h2v2h-2zM869 272h2v2h-2zM881 272h2v2h-2zM893 272h2v2h-2zM905 272h2v2h-2zM917 272h2v2h-2zM929 272h2v2h-2zM941 272h2v2h-2zM953 272h2v2h-2zM965 272h2v2h-2zM977 272h2v2h-2zM989 272h2v2h-2zM1001 272h2v2h-2zM1013 272h2v2h-2zM1025 272h2v2h-2zM1037 272h2v2h-2zM1049 272h2v2h-2zM1061 272h2v2h-2zM353 284h2v2h-2zM365 284h2v2h-2zM377 284h2v2h-2zM389 284h2v2h-2zM401 284h2v2h-2zM413 284h2v2h-2zM425 284h2v2h-2zM437 284h2v2h-2zM449 284h2v2h-2zM461 284h2v2h-2zM473 284h2v2h-2zM485 284h2v2h-2zM497 284h2v2h-2zM509 284h2v2h-2zM521 284h2v2h-2zM533 284h2v2h-2zM545 284h2v2h-2zM557 284h2v2h-2zM569 284h2v2h-2zM581 284h2v2h-2zM593 284h2v2h-2zM605 284h2v2h-2zM617 284h2v2h-2zM629 284h2v2h-2zM641 284h2v2h-2zM653 284h2v2h-2zM665 284h2v2h-2zM677 284h2v2h-2zM689 284h2v2h-2zM701 284h2v2h-2zM713 284h2v2h-2zM725 284h2v2h-2zM737 284h2v2h-2zM749 284h2v2h-2zM761 284h2v2h-2zM773 284h2v2h-2zM785 284h2v2h-2zM797 284h2v2h-2zM809 284h2v2h-2zM821 284h2v2h-2zM833 284h2v2h-2zM845 284h2v2h-2zM857 284h2v2h-2zM869 284h2v2h-2zM881 284h2v2h-2zM893 284h2v2h-2zM905 284h2v2h-2zM917 284h2v2h-2zM929 284h2v2h-2zM941 284h2v2h-2zM953 284h2v2h-2zM965 284h2v2h-2zM977 284h2v2h-2zM989 284h2v2h-2zM1001 284h2v2h-2zM1013 284h2v2h-2zM1025 284h2v2h-2zM1037 284h2v2h-2zM1049 284h2v2h-2zM1061 284h2v2h-2zM353 296h2v2h-2zM365 296h2v2h-2zM377 296h2v2h-2zM389 296h2v2h-2zM401 296h2v2h-2zM413 296h2v2h-2zM425 296h2v2h-2zM437 296h2v2h-2zM449 296h2v2h-2zM461 296h2v2h-2zM473 296h2v2h-2zM485 296h2v2h-2zM497 296h2v2h-2zM509 296h2v2h-2zM521 296h2v2h-2zM533 296h2v2h-2zM545 296h2v2h-2zM557 296h2v2h-2zM569 296h2v2h-2zM581 296h2v2h-2zM593 296h2v2h-2zM605 296h2v2h-2zM617 296h2v2h-2zM629 296h2v2h-2zM641 296h2v2h-2zM653 296h2v2h-2zM665 296h2v2h-2zM677 296h2v2h-2zM689 296h2v2h-2zM701 296h2v2h-2zM713 296h2v2h-2zM725 296h2v2h-2zM737 296h2v2h-2zM749 296h2v2h-2zM761 296h2v2h-2zM773 296h2v2h-2zM785 296h2v2h-2zM797 296h2v2h-2zM809 296h2v2h-2zM821 296h2v2h-2zM833 296h2v2h-2zM845 296h2v2h-2zM857 296h2v2h-2zM869 296h2v2h-2zM881 296h2v2h-2zM893 296h2v2h-2zM905 296h2v2h-2zM917 296h2v2h-2zM929 296h2v2h-2zM941 296h2v2h-2zM953 296h2v2h-2zM965 296h2v2h-2zM977 296h2v2h-2zM989 296h2v2h-2zM1001 296h2v2h-2zM1013 296h2v2h-2zM1025 296h2v2h-2zM1037 296h2v2h-2zM1049 296h2v2h-2zM1061 296h2v2h-2zM353 308h2v2h-2zM365 308h2v2h-2zM377 308h2v2h-2zM389 308h2v2h-2zM401 308h2v2h-2zM413 308h2v2h-2zM425 308h2v2h-2zM437 308h2v2h-2zM449 308h2v2h-2zM461 308h2v2h-2zM473 308h2v2h-2zM485 308h2v2h-2zM497 308h2v2h-2zM509 308h2v2h-2zM521 308h2v2h-2zM533 308h2v2h-2zM545 308h2v2h-2zM557 308h2v2h-2zM569 308h2v2h-2zM581 308h2v2h-2zM593 308h2v2h-2zM605 308h2v2h-2zM617 308h2v2h-2zM629 308h2v2h-2zM641 308h2v2h-2zM653 308h2v2h-2zM665 308h2v2h-2zM677 308h2v2h-2zM689 308h2v2h-2zM701 308h2v2h-2zM713 308h2v2h-2zM725 308h2v2h-2zM737 308h2v2h-2zM749 308h2v2h-2zM761 308h2v2h-2zM773 308h2v2h-2zM785 308h2v2h-2zM797 308h2v2h-2zM809 308h2v2h-2zM821 308h2v2h-2zM833 308h2v2h-2zM845 308h2v2h-2zM857 308h2v2h-2zM869 308h2v2h-2zM881 308h2v2h-2zM893 308h2v2h-2zM905 308h2v2h-2zM917 308h2v2h-2zM929 308h2v2h-2zM941 308h2v2h-2zM953 308h2v2h-2zM965 308h2v2h-2zM977 308h2v2h-2zM989 308h2v2h-2zM1001 308h2v2h-2zM1013 308h2v2h-2zM1025 308h2v2h-2zM1037 308h2v2h-2zM1049 308h2v2h-2zM1061 308h2v2h-2zM353 320h2v2h-2zM365 320h2v2h-2zM377 320h2v2h-2zM389 320h2v2h-2zM401 320h2v2h-2zM413 320h2v2h-2zM425 320h2v2h-2zM437 320h2v2h-2zM449 320h2v2h-2zM461 320h2v2h-2zM473 320h2v2h-2zM485 320h2v2h-2zM497 320h2v2h-2zM509 320h2v2h-2zM521 320h2v2h-2zM533 320h2v2h-2zM545 320h2v2h-2zM557 320h2v2h-2zM569 320h2v2h-2zM581 320h2v2h-2zM593 320h2v2h-2zM605 320h2v2h-2zM617 320h2v2h-2zM629 320h2v2h-2zM641 320h2v2h-2zM653 320h2v2h-2zM665 320h2v2h-2zM677 320h2v2h-2zM689 320h2v2h-2zM701 320h2v2h-2zM713 320h2v2h-2zM725 320h2v2h-2zM737 320h2v2h-2zM749 320h2v2h-2zM761 320h2v2h-2zM773 320h2v2h-2zM785 320h2v2h-2zM797 320h2v2h-2zM809 320h2v2h-2zM821 320h2v2h-2zM833 320h2v2h-2zM845 320h2v2h-2zM857 320h2v2h-2zM869 320h2v2h-2zM881 320h2v2h-2zM893 320h2v2h-2zM905 320h2v2h-2zM917 320h2v2h-2zM929 320h2v2h-2zM941 320h2v2h-2zM953 320h2v2h-2zM965 320h2v2h-2zM977 320h2v2h-2zM989 320h2v2h-2zM1001 320h2v2h-2zM1013 320h2v2h-2zM1025 320h2v2h-2zM1037 320h2v2h-2zM1049 320h2v2h-2zM1061 320h2v2h-2zM353 332h2v2h-2zM365 332h2v2h-2zM377 332h2v2h-2zM389 332h2v2h-2zM401 332h2v2h-2zM413 332h2v2h-2zM425 332h2v2h-2zM437 332h2v2h-2zM449 332h2v2h-2zM461 332h2v2h-2zM473 332h2v2h-2zM485 332h2v2h-2zM497 332h2v2h-2zM509 332h2v2h-2zM521 332h2v2h-2zM533 332h2v2h-2zM545 332h2v2h-2zM557 332h2v2h-2zM569 332h2v2h-2zM581 332h2v2h-2zM593 332h2v2h-2zM605 332h2v2h-2zM617 332h2v2h-2zM629 332h2v2h-2zM641 332h2v2h-2zM653 332h2v2h-2zM665 332h2v2h-2zM677 332h2v2h-2zM689 332h2v2h-2zM701 332h2v2h-2zM713 332h2v2h-2zM725 332h2v2h-2zM737 332h2v2h-2zM749 332h2v2h-2zM761 332h2v2h-2zM773 332h2v2h-2zM785 332h2v2h-2zM797 332h2v2h-2zM809 332h2v2h-2zM821 332h2v2h-2zM833 332h2v2h-2zM845 332h2v2h-2zM857 332h2v2h-2zM869 332h2v2h-2zM881 332h2v2h-2zM893 332h2v2h-2zM905 332h2v2h-2zM917 332h2v2h-2zM929 332h2v2h-2zM941 332h2v2h-2zM953 332h2v2h-2zM965 332h2v2h-2zM977 332h2v2h-2zM989 332h2v2h-2zM1001 332h2v2h-2zM1013 332h2v2h-2zM1025 332h2v2h-2zM1037 332h2v2h-2zM1049 332h2v2h-2zM1061 332h2v2h-2zM353 344h2v2h-2zM365 344h2v2h-2zM377 344h2v2h-2zM389 344h2v2h-2zM401 344h2v2h-2zM413 344h2v2h-2zM425 344h2v2h-2zM437 344h2v2h-2zM449 344h2v2h-2zM461 344h2v2h-2zM473 344h2v2h-2zM485 344h2v2h-2zM497 344h2v2h-2zM509 344h2v2h-2zM521 344h2v2h-2zM533 344h2v2h-2zM545 344h2v2h-2zM557 344h2v2h-2zM569 344h2v2h-2zM581 344h2v2h-2zM593 344h2v2h-2zM605 344h2v2h-2zM617 344h2v2h-2zM629 344h2v2h-2zM641 344h2v2h-2zM653 344h2v2h-2zM665 344h2v2h-2zM677 344h2v2h-2zM689 344h2v2h-2zM701 344h2v2h-2zM713 344h2v2h-2zM725 344h2v2h-2zM737 344h2v2h-2zM749 344h2v2h-2zM761 344h2v2h-2zM773 344h2v2h-2zM785 344h2v2h-2zM797 344h2v2h-2zM809 344h2v2h-2zM821 344h2v2h-2zM833 344h2v2h-2zM845 344h2v2h-2zM857 344h2v2h-2zM869 344h2v2h-2zM881 344h2v2h-2zM893 344h2v2h-2zM905 344h2v2h-2zM917 344h2v2h-2zM929 344h2v2h-2zM941 344h2v2h-2zM953 344h2v2h-2zM965 344h2v2h-2zM977 344h2v2h-2zM989 344h2v2h-2zM1001 344h2v2h-2zM1013 344h2v2h-2zM1025 344h2v2h-2zM1037 344h2v2h-2zM1049 344h2v2h-2zM1061 344h2v2h-2zM353 356h2v2h-2zM365 356h2v2h-2zM377 356h2v2h-2zM389 356h2v2h-2zM401 356h2v2h-2zM413 356h2v2h-2zM425 356h2v2h-2zM437 356h2v2h-2zM449 356h2v2h-2zM461 356h2v2h-2zM473 356h2v2h-2zM485 356h2v2h-2zM497 356h2v2h-2zM509 356h2v2h-2zM521 356h2v2h-2zM533 356h2v2h-2zM545 356h2v2h-2zM557 356h2v2h-2zM569 356h2v2h-2zM581 356h2v2h-2zM593 356h2v2h-2zM605 356h2v2h-2zM617 356h2v2h-2zM629 356h2v2h-2zM641 356h2v2h-2zM653 356h2v2h-2zM665 356h2v2h-2zM677 356h2v2h-2zM689 356h2v2h-2zM701 356h2v2h-2zM713 356h2v2h-2zM725 356h2v2h-2zM737 356h2v2h-2zM749 356h2v2h-2zM761 356h2v2h-2zM773 356h2v2h-2zM785 356h2v2h-2zM797 356h2v2h-2zM809 356h2v2h-2zM821 356h2v2h-2zM833 356h2v2h-2zM845 356h2v2h-2zM857 356h2v2h-2zM869 356h2v2h-2zM881 356h2v2h-2zM893 356h2v2h-2zM905 356h2v2h-2zM917 356h2v2h-2zM929 356h2v2h-2zM941 356h2v2h-2zM953 356h2v2h-2zM965 356h2v2h-2zM977 356h2v2h-2zM989 356h2v2h-2zM1001 356h2v2h-2zM1013 356h2v2h-2zM1025 356h2v2h-2zM1037 356h2v2h-2zM1049 356h2v2h-2zM1061 356h2v2h-2zM353 368h2v2h-2zM365 368h2v2h-2zM377 368h2v2h-2zM389 368h2v2h-2zM401 368h2v2h-2zM413 368h2v2h-2zM425 368h2v2h-2zM437 368h2v2h-2zM449 368h2v2h-2zM461 368h2v2h-2zM473 368h2v2h-2zM485 368h2v2h-2zM497 368h2v2h-2zM509 368h2v2h-2zM521 368h2v2h-2zM533 368h2v2h-2zM545 368h2v2h-2zM557 368h2v2h-2zM569 368h2v2h-2zM581 368h2v2h-2zM593 368h2v2h-2zM605 368h2v2h-2zM617 368h2v2h-2zM629 368h2v2h-2zM641 368h2v2h-2zM653 368h2v2h-2zM665 368h2v2h-2zM677 368h2v2h-2zM689 368h2v2h-2zM701 368h2v2h-2zM713 368h2v2h-2zM725 368h2v2h-2zM737 368h2v2h-2zM749 368h2v2h-2zM761 368h2v2h-2zM773 368h2v2h-2zM785 368h2v2h-2zM797 368h2v2h-2zM809 368h2v2h-2zM821 368h2v2h-2zM833 368h2v2h-2zM845 368h2v2h-2zM857 368h2v2h-2zM869 368h2v2h-2zM881 368h2v2h-2zM893 368h2v2h-2zM905 368h2v2h-2zM917 368h2v2h-2zM929 368h2v2h-2zM941 368h2v2h-2zM953 368h2v2h-2zM965 368h2v2h-2zM977 368h2v2h-2zM989 368h2v2h-2zM1001 368h2v2h-2zM1013 368h2v2h-2zM1025 368h2v2h-2zM1037 368h2v2h-2zM1049 368h2v2h-2zM1061 368h2v2h-2zM353 380h2v2h-2zM365 380h2v2h-2zM377 380h2v2h-2zM389 380h2v2h-2zM401 380h2v2h-2zM413 380h2v2h-2zM425 380h2v2h-2zM437 380h2v2h-2zM449 380h2v2h-2zM461 380h2v2h-2zM473 380h2v2h-2zM485 380h2v2h-2zM497 380h2v2h-2zM509 380h2v2h-2zM521 380h2v2h-2zM533 380h2v2h-2zM545 380h2v2h-2zM557 380h2v2h-2zM569 380h2v2h-2zM581 380h2v2h-2zM593 380h2v2h-2zM605 380h2v2h-2zM617 380h2v2h-2zM629 380h2v2h-2zM641 380h2v2h-2zM653 380h2v2h-2zM665 380h2v2h-2zM677 380h2v2h-2zM689 380h2v2h-2zM701 380h2v2h-2zM713 380h2v2h-2zM725 380h2v2h-2zM737 380h2v2h-2zM749 380h2v2h-2zM761 380h2v2h-2zM773 380h2v2h-2zM785 380h2v2h-2zM797 380h2v2h-2zM809 380h2v2h-2zM821 380h2v2h-2zM833 380h2v2h-2zM845 380h2v2h-2zM857 380h2v2h-2zM869 380h2v2h-2zM881 380h2v2h-2zM893 380h2v2h-2zM905 380h2v2h-2zM917 380h2v2h-2zM929 380h2v2h-2zM941 380h2v2h-2zM953 380h2v2h-2zM965 380h2v2h-2zM977 380h2v2h-2zM989 380h2v2h-2zM1001 380h2v2h-2zM1013 380h2v2h-2zM1025 380h2v2h-2zM1037 380h2v2h-2zM1049 380h2v2h-2zM1061 380h2v2h-2zM353 392h2v2h-2zM365 392h2v2h-2zM377 392h2v2h-2zM389 392h2v2h-2zM401 392h2v2h-2zM413 392h2v2h-2zM425 392h2v2h-2zM437 392h2v2h-2zM449 392h2v2h-2zM461 392h2v2h-2zM473 392h2v2h-2zM485 392h2v2h-2zM497 392h2v2h-2zM509 392h2v2h-2zM521 392h2v2h-2zM533 392h2v2h-2zM545 392h2v2h-2zM557 392h2v2h-2zM569 392h2v2h-2zM581 392h2v2h-2zM593 392h2v2h-2zM605 392h2v2h-2zM617 392h2v2h-2zM629 392h2v2h-2zM641 392h2v2h-2zM653 392h2v2h-2zM665 392h2v2h-2zM677 392h2v2h-2zM689 392h2v2h-2zM701 392h2v2h-2zM713 392h2v2h-2zM725 392h2v2h-2zM737 392h2v2h-2zM749 392h2v2h-2zM761 392h2v2h-2zM773 392h2v2h-2zM785 392h2v2h-2zM797 392h2v2h-2zM809 392h2v2h-2zM821 392h2v2h-2zM833 392h2v2h-2zM845 392h2v2h-2zM857 392h2v2h-2zM869 392h2v2h-2zM881 392h2v2h-2zM893 392h2v2h-2zM905 392h2v2h-2zM917 392h2v2h-2zM929 392h2v2h-2zM941 392h2v2h-2zM953 392h2v2h-2zM965 392h2v2h-2zM977 392h2v2h-2zM989 392h2v2h-2zM1001 392h2v2h-2zM1013 392h2v2h-2zM1025 392h2v2h-2zM1037 392h2v2h-2zM1049 392h2v2h-2zM1061 392h2v2h-2zM353 404h2v2h-2zM365 404h2v2h-2zM377 404h2v2h-2zM389 404h2v2h-2zM401 404h2v2h-2zM413 404h2v2h-2zM425 404h2v2h-2zM437 404h2v2h-2zM449 404h2v2h-2zM461 404h2v2h-2zM473 404h2v2h-2zM485 404h2v2h-2zM497 404h2v2h-2zM509 404h2v2h-2zM521 404h2v2h-2zM533 404h2v2h-2zM545 404h2v2h-2zM557 404h2v2h-2zM569 404h2v2h-2zM581 404h2v2h-2zM593 404h2v2h-2zM605 404h2v2h-2zM617 404h2v2h-2zM629 404h2v2h-2zM641 404h2v2h-2zM653 404h2v2h-2zM665 404h2v2h-2zM677 404h2v2h-2zM689 404h2v2h-2zM701 404h2v2h-2zM713 404h2v2h-2zM725 404h2v2h-2zM737 404h2v2h-2zM749 404h2v2h-2zM761 404h2v2h-2zM773 404h2v2h-2zM785 404h2v2h-2zM797 404h2v2h-2zM809 404h2v2h-2zM821 404h2v2h-2zM833 404h2v2h-2zM845 404h2v2h-2zM857 404h2v2h-2zM869 404h2v2h-2zM881 404h2v2h-2zM893 404h2v2h-2zM905 404h2v2h-2zM917 404h2v2h-2zM929 404h2v2h-2zM941 404h2v2h-2zM953 404h2v2h-2zM965 404h2v2h-2zM977 404h2v2h-2zM989 404h2v2h-2zM1001 404h2v2h-2zM1013 404h2v2h-2zM1025 404h2v2h-2zM1037 404h2v2h-2zM1049 404h2v2h-2zM1061 404h2v2h-2zM353 416h2v2h-2zM365 416h2v2h-2zM377 416h2v2h-2zM389 416h2v2h-2zM401 416h2v2h-2zM413 416h2v2h-2zM425 416h2v2h-2zM437 416h2v2h-2zM449 416h2v2h-2zM461 416h2v2h-2zM473 416h2v2h-2zM485 416h2v2h-2zM497 416h2v2h-2zM509 416h2v2h-2zM521 416h2v2h-2zM533 416h2v2h-2zM545 416h2v2h-2zM557 416h2v2h-2zM569 416h2v2h-2zM581 416h2v2h-2zM593 416h2v2h-2zM605 416h2v2h-2zM617 416h2v2h-2zM629 416h2v2h-2zM641 416h2v2h-2zM653 416h2v2h-2zM665 416h2v2h-2zM677 416h2v2h-2zM689 416h2v2h-2zM701 416h2v2h-2zM713 416h2v2h-2zM725 416h2v2h-2zM737 416h2v2h-2zM749 416h2v2h-2zM761 416h2v2h-2zM773 416h2v2h-2zM785 416h2v2h-2zM797 416h2v2h-2zM809 416h2v2h-2zM821 416h2v2h-2zM833 416h2v2h-2zM845 416h2v2h-2zM857 416h2v2h-2zM869 416h2v2h-2zM881 416h2v2h-2zM893 416h2v2h-2zM905 416h2v2h-2zM917 416h2v2h-2zM929 416h2v2h-2zM941 416h2v2h-2zM953 416h2v2h-2zM965 416h2v2h-2zM977 416h2v2h-2zM989 416h2v2h-2zM1001 416h2v2h-2zM1013 416h2v2h-2zM1025 416h2v2h-2zM1037 416h2v2h-2zM1049 416h2v2h-2zM1061 416h2v2h-2zM353 428h2v2h-2zM365 428h2v2h-2zM377 428h2v2h-2zM389 428h2v2h-2zM401 428h2v2h-2zM413 428h2v2h-2zM425 428h2v2h-2zM437 428h2v2h-2zM449 428h2v2h-2zM461 428h2v2h-2zM473 428h2v2h-2zM485 428h2v2h-2zM497 428h2v2h-2zM509 428h2v2h-2zM521 428h2v2h-2zM533 428h2v2h-2zM545 428h2v2h-2zM557 428h2v2h-2zM569 428h2v2h-2zM581 428h2v2h-2zM593 428h2v2h-2zM605 428h2v2h-2zM617 428h2v2h-2zM629 428h2v2h-2zM641 428h2v2h-2zM653 428h2v2h-2zM665 428h2v2h-2zM677 428h2v2h-2zM689 428h2v2h-2zM701 428h2v2h-2zM713 428h2v2h-2zM725 428h2v2h-2zM737 428h2v2h-2zM749 428h2v2h-2zM761 428h2v2h-2zM773 428h2v2h-2zM785 428h2v2h-2zM797 428h2v2h-2zM809 428h2v2h-2zM821 428h2v2h-2zM833 428h2v2h-2zM845 428h2v2h-2zM857 428h2v2h-2zM869 428h2v2h-2zM881 428h2v2h-2zM893 428h2v2h-2zM905 428h2v2h-2zM917 428h2v2h-2zM929 428h2v2h-2zM941 428h2v2h-2zM953 428h2v2h-2zM965 428h2v2h-2zM977 428h2v2h-2zM989 428h2v2h-2zM1001 428h2v2h-2zM1013 428h2v2h-2zM1025 428h2v2h-2zM1037 428h2v2h-2zM1049 428h2v2h-2zM1061 428h2v2h-2zM353 440h2v2h-2zM365 440h2v2h-2zM377 440h2v2h-2zM389 440h2v2h-2zM401 440h2v2h-2zM413 440h2v2h-2zM425 440h2v2h-2zM437 440h2v2h-2zM449 440h2v2h-2zM461 440h2v2h-2zM473 440h2v2h-2zM485 440h2v2h-2zM497 440h2v2h-2zM509 440h2v2h-2zM521 440h2v2h-2zM533 440h2v2h-2zM545 440h2v2h-2zM557 440h2v2h-2zM569 440h2v2h-2zM581 440h2v2h-2zM593 440h2v2h-2zM605 440h2v2h-2zM617 440h2v2h-2zM629 440h2v2h-2zM641 440h2v2h-2zM653 440h2v2h-2zM665 440h2v2h-2zM677 440h2v2h-2zM689 440h2v2h-2zM701 440h2v2h-2zM713 440h2v2h-2zM725 440h2v2h-2zM737 440h2v2h-2zM749 440h2v2h-2zM761 440h2v2h-2zM773 440h2v2h-2zM785 440h2v2h-2zM797 440h2v2h-2zM809 440h2v2h-2zM821 440h2v2h-2zM833 440h2v2h-2zM845 440h2v2h-2zM857 440h2v2h-2zM869 440h2v2h-2zM881 440h2v2h-2zM893 440h2v2h-2zM905 440h2v2h-2zM917 440h2v2h-2zM929 440h2v2h-2zM941 440h2v2h-2zM953 440h2v2h-2zM965 440h2v2h-2zM977 440h2v2h-2zM989 440h2v2h-2zM1001 440h2v2h-2zM1013 440h2v2h-2zM1025 440h2v2h-2zM1037 440h2v2h-2zM1049 440h2v2h-2zM1061 440h2v2h-2zM353 452h2v2h-2zM365 452h2v2h-2zM377 452h2v2h-2zM389 452h2v2h-2zM401 452h2v2h-2zM413 452h2v2h-2zM425 452h2v2h-2zM437 452h2v2h-2zM449 452h2v2h-2zM461 452h2v2h-2zM473 452h2v2h-2zM485 452h2v2h-2zM497 452h2v2h-2zM509 452h2v2h-2zM521 452h2v2h-2zM533 452h2v2h-2zM545 452h2v2h-2zM557 452h2v2h-2zM569 452h2v2h-2zM581 452h2v2h-2zM593 452h2v2h-2zM605 452h2v2h-2zM617 452h2v2h-2zM629 452h2v2h-2zM641 452h2v2h-2zM653 452h2v2h-2zM665 452h2v2h-2zM677 452h2v2h-2zM689 452h2v2h-2zM701 452h2v2h-2zM713 452h2v2h-2zM725 452h2v2h-2zM737 452h2v2h-2zM749 452h2v2h-2zM761 452h2v2h-2zM773 452h2v2h-2zM785 452h2v2h-2zM797 452h2v2h-2zM809 452h2v2h-2zM821 452h2v2h-2zM833 452h2v2h-2zM845 452h2v2h-2zM857 452h2v2h-2zM869 452h2v2h-2zM881 452h2v2h-2zM893 452h2v2h-2zM905 452h2v2h-2zM917 452h2v2h-2zM929 452h2v2h-2zM941 452h2v2h-2zM953 452h2v2h-2zM965 452h2v2h-2zM977 452h2v2h-2zM989 452h2v2h-2zM1001 452h2v2h-2zM1013 452h2v2h-2zM1025 452h2v2h-2zM1037 452h2v2h-2zM1049 452h2v2h-2zM1061 452h2v2h-2zM353 464h2v2h-2zM365 464h2v2h-2zM377 464h2v2h-2zM389 464h2v2h-2zM401 464h2v2h-2zM413 464h2v2h-2zM425 464h2v2h-2zM437 464h2v2h-2zM449 464h2v2h-2zM461 464h2v2h-2zM473 464h2v2h-2zM485 464h2v2h-2zM497 464h2v2h-2zM509 464h2v2h-2zM521 464h2v2h-2zM533 464h2v2h-2zM545 464h2v2h-2zM557 464h2v2h-2zM569 464h2v2h-2zM581 464h2v2h-2zM593 464h2v2h-2zM605 464h2v2h-2zM617 464h2v2h-2zM629 464h2v2h-2zM641 464h2v2h-2zM653 464h2v2h-2zM665 464h2v2h-2zM677 464h2v2h-2zM689 464h2v2h-2zM701 464h2v2h-2zM713 464h2v2h-2zM725 464h2v2h-2zM737 464h2v2h-2zM749 464h2v2h-2zM761 464h2v2h-2zM773 464h2v2h-2zM785 464h2v2h-2zM797 464h2v2h-2zM809 464h2v2h-2zM821 464h2v2h-2zM833 464h2v2h-2zM845 464h2v2h-2zM857 464h2v2h-2zM869 464h2v2h-2zM881 464h2v2h-2zM893 464h2v2h-2zM905 464h2v2h-2zM917 464h2v2h-2zM929 464h2v2h-2zM941 464h2v2h-2zM953 464h2v2h-2zM965 464h2v2h-2zM977 464h2v2h-2zM989 464h2v2h-2zM1001 464h2v2h-2zM1013 464h2v2h-2zM1025 464h2v2h-2zM1037 464h2v2h-2zM1049 464h2v2h-2zM1061 464h2v2h-2zM353 476h2v2h-2zM365 476h2v2h-2zM377 476h2v2h-2zM389 476h2v2h-2zM401 476h2v2h-2zM413 476h2v2h-2zM425 476h2v2h-2zM437 476h2v2h-2zM449 476h2v2h-2zM461 476h2v2h-2zM473 476h2v2h-2zM485 476h2v2h-2zM497 476h2v2h-2zM509 476h2v2h-2zM521 476h2v2h-2zM533 476h2v2h-2zM545 476h2v2h-2zM557 476h2v2h-2zM569 476h2v2h-2zM581 476h2v2h-2zM593 476h2v2h-2zM605 476h2v2h-2zM617 476h2v2h-2zM629 476h2v2h-2zM641 476h2v2h-2zM653 476h2v2h-2zM665 476h2v2h-2zM677 476h2v2h-2zM689 476h2v2h-2zM701 476h2v2h-2zM713 476h2v2h-2zM725 476h2v2h-2zM737 476h2v2h-2zM749 476h2v2h-2zM761 476h2v2h-2zM773 476h2v2h-2zM785 476h2v2h-2zM797 476h2v2h-2zM809 476h2v2h-2zM821 476h2v2h-2zM833 476h2v2h-2zM845 476h2v2h-2zM857 476h2v2h-2zM869 476h2v2h-2zM881 476h2v2h-2zM893 476h2v2h-2zM905 476h2v2h-2zM917 476h2v2h-2zM929 476h2v2h-2zM941 476h2v2h-2zM953 476h2v2h-2zM965 476h2v2h-2zM977 476h2v2h-2zM989 476h2v2h-2zM1001 476h2v2h-2zM1013 476h2v2h-2zM1025 476h2v2h-2zM1037 476h2v2h-2zM1049 476h2v2h-2zM1061 476h2v2h-2zM353 488h2v2h-2zM365 488h2v2h-2zM377 488h2v2h-2zM389 488h2v2h-2zM401 488h2v2h-2zM413 488h2v2h-2zM425 488h2v2h-2zM437 488h2v2h-2zM449 488h2v2h-2zM461 488h2v2h-2zM473 488h2v2h-2zM485 488h2v2h-2zM497 488h2v2h-2zM509 488h2v2h-2zM521 488h2v2h-2zM533 488h2v2h-2zM545 488h2v2h-2zM557 488h2v2h-2zM569 488h2v2h-2zM581 488h2v2h-2zM593 488h2v2h-2zM605 488h2v2h-2zM617 488h2v2h-2zM629 488h2v2h-2zM641 488h2v2h-2zM653 488h2v2h-2zM665 488h2v2h-2zM677 488h2v2h-2zM689 488h2v2h-2zM701 488h2v2h-2zM713 488h2v2h-2zM725 488h2v2h-2zM737 488h2v2h-2zM749 488h2v2h-2zM761 488h2v2h-2zM773 488h2v2h-2zM785 488h2v2h-2zM797 488h2v2h-2zM809 488h2v2h-2zM821 488h2v2h-2zM833 488h2v2h-2zM845 488h2v2h-2zM857 488h2v2h-2zM869 488h2v2h-2zM881 488h2v2h-2zM893 488h2v2h-2zM905 488h2v2h-2zM917 488h2v2h-2zM929 488h2v2h-2zM941 488h2v2h-2zM953 488h2v2h-2zM965 488h2v2h-2zM977 488h2v2h-2zM989 488h2v2h-2zM1001 488h2v2h-2zM1013 488h2v2h-2zM1025 488h2v2h-2zM1037 488h2v2h-2zM1049 488h2v2h-2zM1061 488h2v2h-2zM353 500h2v2h-2zM365 500h2v2h-2zM377 500h2v2h-2zM389 500h2v2h-2zM401 500h2v2h-2zM413 500h2v2h-2zM425 500h2v2h-2zM437 500h2v2h-2zM449 500h2v2h-2zM461 500h2v2h-2zM473 500h2v2h-2zM485 500h2v2h-2zM497 500h2v2h-2zM509 500h2v2h-2zM521 500h2v2h-2zM533 500h2v2h-2zM545 500h2v2h-2zM557 500h2v2h-2zM569 500h2v2h-2zM581 500h2v2h-2zM593 500h2v2h-2zM605 500h2v2h-2zM617 500h2v2h-2zM629 500h2v2h-2zM641 500h2v2h-2zM653 500h2v2h-2zM665 500h2v2h-2zM677 500h2v2h-2zM689 500h2v2h-2zM701 500h2v2h-2zM713 500h2v2h-2zM725 500h2v2h-2zM737 500h2v2h-2zM749 500h2v2h-2zM761 500h2v2h-2zM773 500h2v2h-2zM785 500h2v2h-2zM797 500h2v2h-2zM809 500h2v2h-2zM821 500h2v2h-2zM833 500h2v2h-2zM845 500h2v2h-2zM857 500h2v2h-2zM869 500h2v2h-2zM881 500h2v2h-2zM893 500h2v2h-2zM905 500h2v2h-2zM917 500h2v2h-2zM929 500h2v2h-2zM941 500h2v2h-2zM953 500h2v2h-2zM965 500h2v2h-2zM977 500h2v2h-2zM989 500h2v2h-2zM1001 500h2v2h-2zM1013 500h2v2h-2zM1025 500h2v2h-2zM1037 500h2v2h-2zM1049 500h2v2h-2zM1061 500h2v2h-2zM353 512h2v2h-2zM365 512h2v2h-2zM377 512h2v2h-2zM389 512h2v2h-2zM401 512h2v2h-2zM413 512h2v2h-2zM425 512h2v2h-2zM437 512h2v2h-2zM449 512h2v2h-2zM461 512h2v2h-2zM473 512h2v2h-2zM485 512h2v2h-2zM497 512h2v2h-2zM509 512h2v2h-2zM521 512h2v2h-2zM533 512h2v2h-2zM545 512h2v2h-2zM557 512h2v2h-2zM569 512h2v2h-2zM581 512h2v2h-2zM593 512h2v2h-2zM605 512h2v2h-2zM617 512h2v2h-2zM629 512h2v2h-2zM641 512h2v2h-2zM653 512h2v2h-2zM665 512h2v2h-2zM677 512h2v2h-2zM689 512h2v2h-2zM701 512h2v2h-2zM713 512h2v2h-2zM725 512h2v2h-2zM737 512h2v2h-2zM749 512h2v2h-2zM761 512h2v2h-2zM773 512h2v2h-2zM785 512h2v2h-2zM797 512h2v2h-2zM809 512h2v2h-2zM821 512h2v2h-2zM833 512h2v2h-2zM845 512h2v2h-2zM857 512h2v2h-2zM869 512h2v2h-2zM881 512h2v2h-2zM893 512h2v2h-2zM905 512h2v2h-2zM917 512h2v2h-2zM929 512h2v2h-2zM941 512h2v2h-2zM953 512h2v2h-2zM965 512h2v2h-2zM977 512h2v2h-2zM989 512h2v2h-2zM1001 512h2v2h-2zM1013 512h2v2h-2zM1025 512h2v2h-2zM1037 512h2v2h-2zM1049 512h2v2h-2zM1061 512h2v2h-2zM353 524h2v2h-2zM365 524h2v2h-2zM377 524h2v2h-2zM389 524h2v2h-2zM401 524h2v2h-2zM413 524h2v2h-2zM425 524h2v2h-2zM437 524h2v2h-2zM449 524h2v2h-2zM461 524h2v2h-2zM473 524h2v2h-2zM485 524h2v2h-2zM497 524h2v2h-2zM509 524h2v2h-2zM521 524h2v2h-2zM533 524h2v2h-2zM545 524h2v2h-2zM557 524h2v2h-2zM569 524h2v2h-2zM581 524h2v2h-2zM593 524h2v2h-2zM605 524h2v2h-2zM617 524h2v2h-2zM629 524h2v2h-2zM641 524h2v2h-2zM653 524h2v2h-2zM665 524h2v2h-2zM677 524h2v2h-2zM689 524h2v2h-2zM701 524h2v2h-2zM713 524h2v2h-2zM725 524h2v2h-2zM737 524h2v2h-2zM749 524h2v2h-2zM761 524h2v2h-2zM773 524h2v2h-2zM785 524h2v2h-2zM797 524h2v2h-2zM809 524h2v2h-2zM821 524h2v2h-2zM833 524h2v2h-2zM845 524h2v2h-2zM857 524h2v2h-2zM869 524h2v2h-2zM881 524h2v2h-2zM893 524h2v2h-2zM905 524h2v2h-2zM917 524h2v2h-2zM929 524h2v2h-2zM941 524h2v2h-2zM953 524h2v2h-2zM965 524h2v2h-2zM977 524h2v2h-2zM989 524h2v2h-2zM1001 524h2v2h-2zM1013 524h2v2h-2zM1025 524h2v2h-2zM1037 524h2v2h-2zM1049 524h2v2h-2zM1061 524h2v2h-2zM353 536h2v2h-2zM365 536h2v2h-2zM377 536h2v2h-2zM389 536h2v2h-2zM401 536h2v2h-2zM413 536h2v2h-2zM425 536h2v2h-2zM437 536h2v2h-2zM449 536h2v2h-2zM461 536h2v2h-2zM473 536h2v2h-2zM485 536h2v2h-2zM497 536h2v2h-2zM509 536h2v2h-2zM521 536h2v2h-2zM533 536h2v2h-2zM545 536h2v2h-2zM557 536h2v2h-2zM569 536h2v2h-2zM581 536h2v2h-2zM593 536h2v2h-2zM605 536h2v2h-2zM617 536h2v2h-2zM629 536h2v2h-2zM641 536h2v2h-2zM653 536h2v2h-2zM665 536h2v2h-2zM677 536h2v2h-2zM689 536h2v2h-2zM701 536h2v2h-2zM713 536h2v2h-2zM725 536h2v2h-2zM737 536h2v2h-2zM749 536h2v2h-2zM761 536h2v2h-2zM773 536h2v2h-2zM785 536h2v2h-2zM797 536h2v2h-2zM809 536h2v2h-2zM821 536h2v2h-2zM833 536h2v2h-2zM845 536h2v2h-2zM857 536h2v2h-2zM869 536h2v2h-2zM881 536h2v2h-2zM893 536h2v2h-2zM905 536h2v2h-2zM917 536h2v2h-2zM929 536h2v2h-2zM941 536h2v2h-2zM953 536h2v2h-2zM965 536h2v2h-2zM977 536h2v2h-2zM989 536h2v2h-2zM1001 536h2v2h-2zM1013 536h2v2h-2zM1025 536h2v2h-2zM1037 536h2v2h-2zM1049 536h2v2h-2zM1061 536h2v2h-2zM353 548h2v2h-2zM365 548h2v2h-2zM377 548h2v2h-2zM389 548h2v2h-2zM401 548h2v2h-2zM413 548h2v2h-2zM425 548h2v2h-2zM437 548h2v2h-2zM449 548h2v2h-2zM461 548h2v2h-2zM473 548h2v2h-2zM485 548h2v2h-2zM497 548h2v2h-2zM509 548h2v2h-2zM521 548h2v2h-2zM533 548h2v2h-2zM545 548h2v2h-2zM557 548h2v2h-2zM569 548h2v2h-2zM581 548h2v2h-2zM593 548h2v2h-2zM605 548h2v2h-2zM617 548h2v2h-2zM629 548h2v2h-2zM641 548h2v2h-2zM653 548h2v2h-2zM665 548h2v2h-2zM677 548h2v2h-2zM689 548h2v2h-2zM701 548h2v2h-2zM713 548h2v2h-2zM725 548h2v2h-2zM737 548h2v2h-2zM749 548h2v2h-2zM761 548h2v2h-2zM773 548h2v2h-2zM785 548h2v2h-2zM797 548h2v2h-2zM809 548h2v2h-2zM821 548h2v2h-2zM833 548h2v2h-2zM845 548h2v2h-2zM857 548h2v2h-2zM869 548h2v2h-2zM881 548h2v2h-2zM893 548h2v2h-2zM905 548h2v2h-2zM917 548h2v2h-2zM929 548h2v2h-2zM941 548h2v2h-2zM953 548h2v2h-2zM965 548h2v2h-2zM977 548h2v2h-2zM989 548h2v2h-2zM1001 548h2v2h-2zM1013 548h2v2h-2zM1025 548h2v2h-2zM1037 548h2v2h-2zM1049 548h2v2h-2zM1061 548h2v2h-2zM353 560h2v2h-2zM365 560h2v2h-2zM377 560h2v2h-2zM389 560h2v2h-2zM401 560h2v2h-2zM413 560h2v2h-2zM425 560h2v2h-2zM437 560h2v2h-2zM449 560h2v2h-2zM461 560h2v2h-2zM473 560h2v2h-2zM485 560h2v2h-2zM497 560h2v2h-2zM509 560h2v2h-2zM521 560h2v2h-2zM533 560h2v2h-2zM545 560h2v2h-2zM557 560h2v2h-2zM569 560h2v2h-2zM581 560h2v2h-2zM593 560h2v2h-2zM605 560h2v2h-2zM617 560h2v2h-2zM629 560h2v2h-2zM641 560h2v2h-2zM653 560h2v2h-2zM665 560h2v2h-2zM677 560h2v2h-2zM689 560h2v2h-2zM701 560h2v2h-2zM713 560h2v2h-2zM725 560h2v2h-2zM737 560h2v2h-2zM749 560h2v2h-2zM761 560h2v2h-2zM773 560h2v2h-2zM785 560h2v2h-2zM797 560h2v2h-2zM809 560h2v2h-2zM821 560h2v2h-2zM833 560h2v2h-2zM845 560h2v2h-2zM857 560h2v2h-2zM869 560h2v2h-2zM881 560h2v2h-2zM893 560h2v2h-2zM905 560h2v2h-2zM917 560h2v2h-2zM929 560h2v2h-2zM941 560h2v2h-2zM953 560h2v2h-2zM965 560h2v2h-2zM977 560h2v2h-2zM989 560h2v2h-2zM1001 560h2v2h-2zM1013 560h2v2h-2zM1025 560h2v2h-2zM1037 560h2v2h-2zM1049 560h2v2h-2zM1061 560h2v2h-2zM353 572h2v2h-2zM365 572h2v2h-2zM377 572h2v2h-2zM389 572h2v2h-2zM401 572h2v2h-2zM413 572h2v2h-2zM425 572h2v2h-2zM437 572h2v2h-2zM449 572h2v2h-2zM461 572h2v2h-2zM473 572h2v2h-2zM485 572h2v2h-2zM497 572h2v2h-2zM509 572h2v2h-2zM521 572h2v2h-2zM533 572h2v2h-2zM545 572h2v2h-2zM557 572h2v2h-2zM569 572h2v2h-2zM581 572h2v2h-2zM593 572h2v2h-2zM605 572h2v2h-2zM617 572h2v2h-2zM629 572h2v2h-2zM641 572h2v2h-2zM653 572h2v2h-2zM665 572h2v2h-2zM677 572h2v2h-2zM689 572h2v2h-2zM701 572h2v2h-2zM713 572h2v2h-2zM725 572h2v2h-2zM737 572h2v2h-2zM749 572h2v2h-2zM761 572h2v2h-2zM773 572h2v2h-2zM785 572h2v2h-2zM797 572h2v2h-2zM809 572h2v2h-2zM821 572h2v2h-2zM833 572h2v2h-2zM845 572h2v2h-2zM857 572h2v2h-2zM869 572h2v2h-2zM881 572h2v2h-2zM893 572h2v2h-2zM905 572h2v2h-2zM917 572h2v2h-2zM929 572h2v2h-2zM941 572h2v2h-2zM953 572h2v2h-2zM965 572h2v2h-2zM977 572h2v2h-2zM989 572h2v2h-2zM1001 572h2v2h-2zM1013 572h2v2h-2zM1025 572h2v2h-2zM1037 572h2v2h-2zM1049 572h2v2h-2zM1061 572h2v2h-2zM353 584h2v2h-2zM365 584h2v2h-2zM377 584h2v2h-2zM389 584h2v2h-2zM401 584h2v2h-2zM413 584h2v2h-2zM425 584h2v2h-2zM437 584h2v2h-2zM449 584h2v2h-2zM461 584h2v2h-2zM473 584h2v2h-2zM485 584h2v2h-2zM497 584h2v2h-2zM509 584h2v2h-2zM521 584h2v2h-2zM533 584h2v2h-2zM545 584h2v2h-2zM557 584h2v2h-2zM569 584h2v2h-2zM581 584h2v2h-2zM593 584h2v2h-2zM605 584h2v2h-2zM617 584h2v2h-2zM629 584h2v2h-2zM641 584h2v2h-2zM653 584h2v2h-2zM665 584h2v2h-2zM677 584h2v2h-2zM689 584h2v2h-2zM701 584h2v2h-2zM713 584h2v2h-2zM725 584h2v2h-2zM737 584h2v2h-2zM749 584h2v2h-2zM761 584h2v2h-2zM773 584h2v2h-2zM785 584h2v2h-2zM797 584h2v2h-2zM809 584h2v2h-2zM821 584h2v2h-2zM833 584h2v2h-2zM845 584h2v2h-2zM857 584h2v2h-2zM869 584h2v2h-2zM881 584h2v2h-2zM893 584h2v2h-2zM905 584h2v2h-2zM917 584h2v2h-2zM929 584h2v2h-2zM941 584h2v2h-2zM953 584h2v2h-2zM965 584h2v2h-2zM977 584h2v2h-2zM989 584h2v2h-2zM1001 584h2v2h-2zM1013 584h2v2h-2zM1025 584h2v2h-2zM1037 584h2v2h-2zM1049 584h2v2h-2zM1061 584h2v2h-2z"/>
</svg>
<div class="a " style="left:370px;top:530px;width:75px;height:37px;background:#f0f0f0"></div>
<div class="a " style="left:455px;top:530px;width:75px;height:37px;background:#f0f0f0"></div>
<div class="a " style="left:540px;top:541px;width:72px;height:26px;background:#f0f0f0"></div>
<div class="a " style="left:621px;top:541px;width:75px;height:26px;background:#f0f0f0"></div>
<div class="a " style="left:361px;top:187px;width:702px;height:9px;background:#f3f1f4"></div>
<div class="a " style="left:361px;top:520px;width:702px;height:10px;background:#f0f0f0"></div>
<div class="a " style="left:361px;top:196px;width:702px;height:330px;box-shadow:inset 1px 1px 0 #a0a0a0,inset 2px 2px 0 #fff,inset -1px -1px 0 #fff,inset -2px -2px 0 #a0a0a0;background:#f0f0f0"></div>
<div class="a " style="left:377px;top:218px;width:19px;height:19px;background:#fff;box-shadow:inset 3px 3px 0 #7e7e7e,inset -2px -2px 0 #ececec,0 0 0 1px #f8f8f8"></div>
<div class="a t " style="left:403px;top:218px;">刺客_手里毒</div>
<div class="a " style="left:377px;top:258px;width:19px;height:19px;background:#fff;box-shadow:inset 3px 3px 0 #7e7e7e,inset -2px -2px 0 #ececec,0 0 0 1px #f8f8f8"></div>
<div class="a t " style="left:403px;top:258px;">力士_迅集</div>
<div class="a " style="left:377px;top:298px;width:19px;height:19px;background:#fff;box-shadow:inset 3px 3px 0 #7e7e7e,inset -2px -2px 0 #ececec,0 0 0 1px #f8f8f8"></div>
<div class="a t " style="left:403px;top:298px;">力士_审判加</div>
<div class="a " style="left:377px;top:338px;width:19px;height:19px;background:#fff;box-shadow:inset 3px 3px 0 #7e7e7e,inset -2px -2px 0 #ececec,0 0 0 1px #f8f8f8"></div>
<div class="a t " style="left:403px;top:338px;">基础_暴击[*]</div>
<div class="a " style="left:545px;top:222px;width:19px;height:19px;background:#fff;box-shadow:inset 3px 3px 0 #7e7e7e,inset -2px -2px 0 #ececec,0 0 0 1px #f8f8f8"></div>
<div class="a t " style="left:571px;top:222px;">全职业*暴击</div>
<div class="a " style="left:545px;top:255px;width:19px;height:19px;background:#fff;box-shadow:inset 3px 3px 0 #7e7e7e,inset -2px -2px 0 #ececec,0 0 0 1px #f8f8f8"></div>
<div class="a t " style="left:571px;top:255px;">组合_力士毕业愤怒</div>
<div class="a " style="left:545px;top:295px;width:19px;height:19px;background:#fff;box-shadow:inset 3px 3px 0 #7e7e7e,inset -2px -2px 0 #ececec,0 0 0 1px #f8f8f8"></div>
<div class="a t " style="left:571px;top:295px;">组合_力士迅集步</div>
<div class="a " style="left:545px;top:334px;width:19px;height:19px;background:#fff;box-shadow:inset 3px 3px 0 #7e7e7e,inset -2px -2px 0 #ececec,0 0 0 1px #f8f8f8"></div>
<div class="a t " style="left:571px;top:334px;">式力士戒指愤怒</div>
<div class="a " style="left:747px;top:221px;width:19px;height:19px;background:#fff;box-shadow:inset 3px 3px 0 #7e7e7e,inset -2px -2px 0 #ececec,0 0 0 1px #f8f8f8"></div>
<div class="a t " style="left:810px;top:221px;">激活</div>
<div class="a t fit " style="left:774px;top:220px;width:36px;font-family:'Liberation Serif',serif;font-size:18px;-webkit-text-stroke:0.3px #000"><span>boss</span></div>
<div class="a " style="left:747px;top:250px;width:19px;height:19px;background:#fff;box-shadow:inset 3px 3px 0 #7e7e7e,inset -2px -2px 0 #ececec,0 0 0 1px #f8f8f8"></div>
<div class="a t " style="left:773px;top:250px;">野外</div>
<div class="a t fit " style="left:809px;top:249px;width:36px;font-family:'Liberation Serif',serif;font-size:18px;-webkit-text-stroke:0.3px #000"><span>boss</span></div>
<div class="a t " style="left:846px;top:250px;">挂机</div>
<div class="a " style="left:750px;top:286px;width:19px;height:19px;background:#fff;box-shadow:inset 3px 3px 0 #7e7e7e,inset -2px -2px 0 #ececec,0 0 0 1px #f8f8f8"></div>
<div class="a t " style="left:776px;top:286px;">探索古里</div>
<div class="a sunken" style="left:903px;top:261px;width:140px;height:27px;"></div>
<div class="a t " style="left:906px;top:265px;">不执行</div>
<div class="a raised" style="left:1018px;top:263px;width:23px;height:23px;"><svg width="23" height="23"><path d="M6 9h11l-5.5 6z" fill="#000"/></svg></div>
<div class="a sunken" style="left:903px;top:299px;width:140px;height:27px;"></div>
<div class="a t " style="left:906px;top:303px;">力士</div>
<div class="a raised" style="left:1018px;top:301px;width:23px;height:23px;"><svg width="23" height="23"><path d="M6 9h11l-5.5 6z" fill="#000"/></svg></div>
<div class="a sunken" style="left:904px;top:334px;width:140px;height:27px;"></div>
<div class="a t " style="left:907px;top:338px;">循环</div>
<div class="a raised" style="left:1019px;top:336px;width:23px;height:23px;"><svg width="23" height="23"><path d="M6 9h11l-5.5 6z" fill="#000"/></svg></div>
<div class="a sunken" style="left:903px;top:369px;width:140px;height:27px;"></div>
<div class="a t " style="left:906px;top:373px;">收藏</div>
<div class="a raised" style="left:1018px;top:371px;width:23px;height:23px;"><svg width="23" height="23"><path d="M6 9h11l-5.5 6z" fill="#000"/></svg></div>
<div class="a sunken" style="left:376px;top:368px;width:70px;height:34px;"></div>
<div class="a sunken" style="left:450px;top:368px;width:70px;height:34px;"></div>
<div class="a sunken" style="left:526px;top:367px;width:82px;height:34px;"></div>
<div class="a raised" style="left:617px;top:367px;width:120px;height:35px;"></div>
<div class="a t " style="left:659px;top:374px;">测试</div>
<div class="a sunken" style="left:368px;top:409px;width:683px;height:105px;"></div>
<div class="a " style="left:377px;top:544px;width:19px;height:19px;background:#fff;box-shadow:inset 3px 3px 0 #7e7e7e,inset -2px -2px 0 #ececec,0 0 0 1px #f8f8f8"></div>
<div class="a t " style="left:403px;top:544px;">扫拍</div>
<div class="a " style="left:460px;top:544px;width:19px;height:19px;background:#fff;box-shadow:inset 3px 3px 0 #7e7e7e,inset -2px -2px 0 #ececec,0 0 0 1px #f8f8f8"></div>
<div class="a t " style="left:486px;top:544px;">卡刀</div>
<div class="a " style="left:542px;top:544px;width:19px;height:19px;background:#fff;box-shadow:inset 3px 3px 0 #7e7e7e,inset -2px -2px 0 #ececec,0 0 0 1px #f8f8f8"></div>
<div class="a t " style="left:568px;top:544px;">测试</div>
<div class="a " style="left:626px;top:544px;width:19px;height:19px;background:#fff;box-shadow:inset 3px 3px 0 #7e7e7e,inset -2px -2px 0 #ececec,0 0 0 1px #f8f8f8"></div>
<div class="a t " style="left:652px;top:544px;">刷新</div>
<div class="a raised" style="left:727px;top:536px;width:96px;height:36px;"></div>
<div class="a t fit " style="left:760px;top:542px;width:27px;font-family:'Liberation Serif',serif;font-size:18px;-webkit-text-stroke:0.2px #000;line-height:22px"><span>Bmp</span></div>
<div class="a raised" style="left:833px;top:536px;width:109px;height:36px;"></div>
<div class="a t " style="left:868px;top:543px;">换线</div>
<div class="a raised" style="left:953px;top:536px;width:109px;height:36px;"></div>
<div class="a t fit " style="left:972px;top:542px;width:70px;font-family:'Liberation Serif',serif;font-size:18px;-webkit-text-stroke:0.2px #000;line-height:22px"><span>[ Home ]</span></div>
<div class="a " style="left:718px;top:527px;width:7px;height:7px;background:#000080"></div>
<div class="a " style="left:718px;top:550px;width:7px;height:7px;background:#000080"></div>
<div class="a " style="left:718px;top:574px;width:7px;height:7px;background:#000080"></div>
<div class="a " style="left:771px;top:527px;width:7px;height:7px;background:#000080"></div>
<div class="a " style="left:771px;top:574px;width:7px;height:7px;background:#000080"></div>
<div class="a " style="left:824px;top:527px;width:7px;height:7px;background:#000080"></div>
<div class="a " style="left:824px;top:550px;width:7px;height:7px;background:#000080"></div>
<div class="a " style="left:824px;top:574px;width:7px;height:7px;background:#000080"></div>
<div class="a " style="left:350px;top:598px;width:725px;height:28px;background:#f0f0f0"></div>
<div class="a " style="left:352px;top:599px;width:75px;height:26px;box-shadow:inset 1px 1px 0 #a0a0a0,inset -1px -1px 0 #fff"></div>
<div class="a t fit " style="left:355px;top:602px;width:36px;font-family:'Liberation Serif',serif;font-size:18px;-webkit-text-stroke:0.2px #000;line-height:22px"><span>Bind</span></div>
<div class="a " style="left:430px;top:599px;width:71px;height:26px;box-shadow:inset 1px 1px 0 #a0a0a0,inset -1px -1px 0 #fff"></div>
<div class="a " style="left:506px;top:599px;width:70px;height:26px;box-shadow:inset 1px 1px 0 #a0a0a0,inset -1px -1px 0 #fff"></div>
<div class="a t fit " style="left:509px;top:602px;width:45px;font-family:'Liberation Serif',serif;font-size:18px;-webkit-text-stroke:0.2px #000;line-height:22px"><span>Ratio</span></div>
<div class="a " style="left:581px;top:599px;width:146px;height:26px;box-shadow:inset 1px 1px 0 #a0a0a0,inset -1px -1px 0 #fff"></div>
<div class="a " style="left:730px;top:599px;width:72px;height:26px;box-shadow:inset 1px 1px 0 #a0a0a0,inset -1px -1px 0 #fff"></div>
<div class="a t fit " style="left:733px;top:602px;width:37px;font-family:'Liberation Serif',serif;font-size:18px;-webkit-text-stroke:0.2px #000;line-height:22px"><span>Mail</span></div>
<div class="a " style="left:805px;top:599px;width:72px;height:26px;box-shadow:inset 1px 1px 0 #a0a0a0,inset -1px -1px 0 #fff"></div>
<div class="a " style="left:332px;top:1177px;width:871px;height:32px;background:#f0f0f0"></div>
<div class="a " style="left:332px;top:1177px;width:871px;height:2px;background:#fafafa"></div>
<svg class="a" style="left:0;top:0" width="1203" height="1220">
<rect x="332" y="1180.5" width="871" height="1.5" fill="#6e6e6e"/>
<path d="M333 1181L345 1208.5H475L487 1181" fill="#f0f0f0" stroke="#2a2a2a" stroke-width="1.3"/>
<path d="M346 1208.5H474" stroke="#7a7a7a" stroke-width="1.5"/>
<path d="M580 1181L592 1208.5H674L686 1181" fill="#f0f0f0" stroke="#2a2a2a" stroke-width="1.3"/>
<path d="M593 1208.5H673" stroke="#7a7a7a" stroke-width="1.5"/>
<path d="M669 1181L681 1208.5H809L821 1181" fill="#f0f0f0" stroke="#2a2a2a" stroke-width="1.3"/>
<path d="M682 1208.5H808" stroke="#7a7a7a" stroke-width="1.5"/>
<path d="M807 1181L819 1208.5H1015L1027 1181" fill="#f0f0f0" stroke="#2a2a2a" stroke-width="1.3"/>
<path d="M820 1208.5H1014" stroke="#7a7a7a" stroke-width="1.5"/>
<path d="M472.5 1181L484.5 1208.5H582L594 1181" fill="#ffffff" stroke="#2a2a2a" stroke-width="1.3"/>
<path d="M485.5 1208.5H581" stroke="#7a7a7a" stroke-width="1.5"/>
</svg>
<div class="a t fit " style="left:356px;top:1185px;width:104px;color:#9a9a26;-webkit-text-stroke:0.2px #9a9a26"><span>[全局变量表]</span></div>
<div class="a t fit " style="left:598px;top:1185px;width:62px;color:#000;-webkit-text-stroke:0.2px #000"><span>程序集1</span></div>
<div class="a t fit " style="left:690px;top:1185px;width:106px;color:#9a9a26;-webkit-text-stroke:0.2px #9a9a26"><span>[常量数据表]</span></div>
<div class="a t fit " style="left:830px;top:1185px;width:168px;color:#000;-webkit-text-stroke:0.2px #000"><span>窗口程序集_启动窗口</span></div>
<div class="a t fit " style="left:488px;top:1185px;width:88px;color:#0c168c;font-weight:bold"><span>_启动窗口</span></div>
<script>
(function(){var els=document.querySelectorAll('.fit');for(var i=0;i<els.length;i++){var e=els[i],sp=e.firstChild,tw=parseFloat(e.style.width),sw=sp.getBoundingClientRect().width;if(sw>0)sp.style.transform='scaleX('+(tw/sw)+')';}})();
</script>
</body></html>
